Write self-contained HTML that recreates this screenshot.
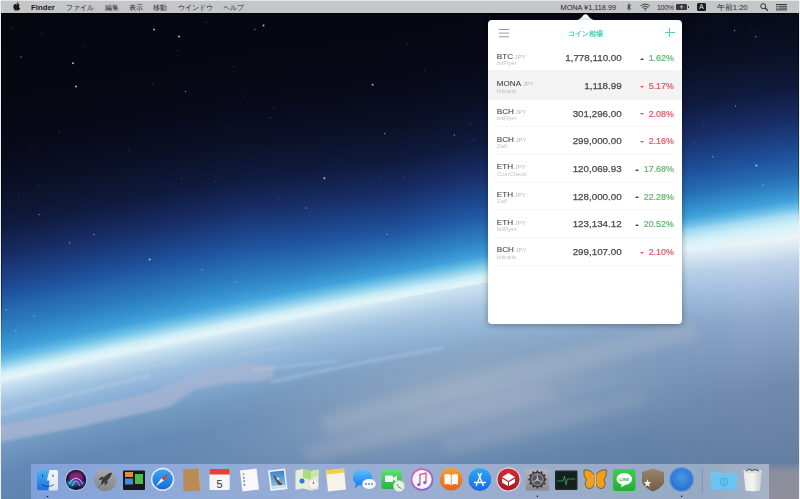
<!DOCTYPE html>
<html><head><meta charset="utf-8">
<style>
html,body{margin:0;padding:0;}
body{width:800px;height:499px;overflow:hidden;position:relative;font-family:"Liberation Sans",sans-serif;background:#0a0c1f;}
.abs{position:absolute;}
.c{position:absolute;top:0;width:8px;height:499px;}
#menubar{left:0;top:0;width:800px;height:13px;background:#c5c6c8;border-top:1px solid #e6e6e8;box-sizing:border-box;box-shadow:0 1px 1px rgba(0,0,0,.5);}
.mb{position:absolute;top:.8px;font-size:7.6px;line-height:13px;color:#2a2a2a;white-space:nowrap;}
#popover{left:488px;top:20px;width:194px;height:304.3px;background:#fff;border-radius:4px;box-shadow:0 1px 6px rgba(0,0,0,.35);}
#arrow{left:576px;top:13px;width:0;height:0;border-left:9.5px solid transparent;border-right:9.5px solid transparent;border-bottom:7.5px solid #fff;}
.row{position:absolute;left:0;width:194px;height:27.69px;}
.row.hl{background:transparent;}
.row:after{content:"";position:absolute;left:6px;right:8px;bottom:0;height:1px;background:#f6f6f6;}
.sym{position:absolute;left:8.8px;top:8.6px;font-size:8.1px;line-height:8.1px;color:#474747;-webkit-text-stroke:.1px #474747;white-space:nowrap;}
.sym i{font-style:normal;font-size:6.1px;color:#b8b8b8;margin-left:1.6px;-webkit-text-stroke:0;}
.ex{position:absolute;left:9px;top:15.9px;font-size:6px;line-height:6px;color:#c2c2c2;white-space:nowrap;}
.price{position:absolute;right:60.3px;top:9.1px;font-size:9.8px;line-height:9.8px;color:#484848;-webkit-text-stroke:.25px #484848;white-space:nowrap;}
.pct{position:absolute;right:8.2px;top:10.1px;font-size:8.9px;line-height:8.9px;white-space:nowrap;}
.pct.up{color:#5cb46a;-webkit-text-stroke:.2px #5cb46a;}
.pct.down{color:#e9505e;-webkit-text-stroke:.2px #e9505e;}
.pct b{display:inline-block;width:0;height:0;margin-right:5px;vertical-align:middle;position:relative;top:0;}
.pct.up b{border-left:2.1px solid transparent;border-right:2.1px solid transparent;border-bottom:2.2px solid #444;}
.pct.down b{border-left:2px solid transparent;border-right:2px solid transparent;border-top:2.2px solid #e9505e;}
#dock{left:30.5px;top:463.5px;width:738.5px;height:40px;background:linear-gradient(90deg,#7fa0da 0%,#86a4da 4%,#92abd8 24%,#9aaed0 55%,#9aacc8 78%,#96aac4 91%,#a6b2c8 100%);}
#grayr{left:769px;top:462px;width:30px;height:37px;background:linear-gradient(180deg,rgba(138,140,156,0) 0px,rgba(138,142,158,.8) 7px,#8c8e9c 12px,#908e9a 37px);}
</style></head><body>
<!--BG--><div id="bg"><div class="c" style="left:0px;background:linear-gradient(167.05deg,#06060e -57.6px,#060710 87.6px,#080a1a 147.1px,#0a1027 184.1px,#0f1b3e 220.2px,#182e68 251.4px,#1d4a92 279.6px,#2058a2 290.3px,#266bb0 304.0px,#2d82c2 322.5px,#3f9fd9 342.0px,#46a5dc 343.9px,#6abee7 351.7px,#78c6ea 353.7px,#c4eaf5 362.5px,#d4f0f7 365.4px,#ddf2f8 367.3px,#e1f4f8 370.3px,#e0f2f7 371.2px,#cbe1f0 376.1px,#adcde6 386.8px,#a0c1e0 393.7px,#8bb1d9 411.2px,#6f96bf 439.5px,#6288b6 462.8px,#5e81ab 518.4px,#5c7fa9 545.7px);background-size:800px 499px;background-position:-0px 0"></div>
<div class="c" style="left:8px;background:linear-gradient(167.11deg,#06060e -55.8px,#060710 87.5px,#080a1a 146.9px,#0a1026 184.0px,#0f1b3d 220.1px,#182d67 251.2px,#1d4a92 279.5px,#2057a2 290.2px,#266ab0 303.9px,#2d80c1 321.4px,#348dcc 330.2px,#41a1da 342.9px,#6ec1e8 352.6px,#c2e9f5 362.4px,#ceeef7 364.3px,#dcf2f8 367.2px,#e1f4f8 370.2px,#e1f3f8 371.1px,#cbe1f0 376.0px,#adcde7 386.7px,#a0c1e0 393.6px,#8ab0d8 412.1px,#6f97bf 439.4px,#6288b6 462.8px,#5e81ab 518.3px,#5c7fa9 547.6px);background-size:800px 499px;background-position:-8px 0"></div>
<div class="c" style="left:16px;background:linear-gradient(167.16deg,#06060e -54.1px,#060710 88.3px,#080a1a 146.8px,#0a1027 184.8px,#0f1b3e 220.9px,#182d67 251.1px,#1d4991 279.4px,#2058a3 291.1px,#266aaf 303.8px,#2d80c1 321.3px,#338dcb 330.1px,#40a0da 342.8px,#6dc0e8 352.5px,#c1e8f5 362.3px,#c9ecf6 363.2px,#dcf2f8 367.1px,#e2f4f8 371.0px,#cce2f0 375.9px,#aecee7 386.6px,#a1c1e0 393.5px,#8ab0d8 412.0px,#6f97bf 439.3px,#6288b6 462.7px,#5e81ab 518.3px,#5c7fa9 549.5px);background-size:800px 499px;background-position:-16px 0"></div>
<div class="c" style="left:24px;background:linear-gradient(167.21deg,#06060e -52.3px,#060710 89.1px,#080a1a 147.6px,#0a1027 184.7px,#0f1b3e 220.7px,#182e68 251.9px,#1d4a92 280.2px,#2057a2 291.0px,#266ab0 304.6px,#2d7fc0 321.2px,#338ccb 330.0px,#40a0da 342.6px,#6cc0e8 352.4px,#bfe8f5 362.1px,#c7ecf6 363.1px,#dcf2f8 367.0px,#e2f4f8 370.9px,#cce2f0 375.8px,#aecee7 386.5px,#a1c1e0 393.3px,#8ab0d8 411.9px,#6f97bf 439.2px,#6288b6 462.6px,#5e81ab 518.2px,#5c7fa9 551.3px);background-size:800px 499px;background-position:-24px 0"></div>
<div class="c" style="left:32px;background:linear-gradient(167.26deg,#06060e -50.6px,#060710 88.9px,#080a1a 147.4px,#0a1026 184.5px,#0f1a3d 220.6px,#182d67 251.8px,#1d4992 280.1px,#2058a3 291.8px,#266aaf 304.5px,#2d7fc0 321.0px,#328ac9 328.8px,#409fda 342.5px,#4ba8de 345.4px,#6bbfe8 352.2px,#c6ebf6 363.0px,#dbf2f8 366.9px,#e2f4f8 370.8px,#d2e7f2 374.7px,#c7dfef 377.6px,#adcde6 387.4px,#a1c1e0 393.2px,#8ab0d8 411.7px,#6f97bf 439.1px,#6288b6 462.5px,#5e81ab 518.1px,#5c7fa9 553.2px);background-size:800px 499px;background-position:-32px 0"></div>
<div class="c" style="left:40px;background:linear-gradient(167.31deg,#06060e -48.9px,#060710 89.7px,#080a1a 148.2px,#0a1027 185.3px,#0f1b3e 221.4px,#182e68 252.6px,#1d4a92 280.9px,#2058a2 291.6px,#266bb0 305.3px,#2d80c1 321.9px,#338dcb 330.6px,#41a1da 343.3px,#6abfe7 352.1px,#79c6ea 354.0px,#c4eaf6 362.8px,#daf1f8 366.7px,#e0f3f8 369.7px,#e1f4f8 370.6px,#e0f2f7 371.6px,#cae1f0 376.5px,#adcde6 387.2px,#a1c1e0 393.1px,#8ab1d9 411.6px,#6f96bf 439.9px,#6288b6 463.3px,#5e81ab 518.9px,#5c7ea8 555.0px);background-size:800px 499px;background-position:-40px 0"></div>
<div class="c" style="left:48px;background:linear-gradient(167.37deg,#06060e -47.2px,#060710 89.4px,#080a1a 148.0px,#0a1026 185.1px,#0f1b3d 221.2px,#182d67 252.4px,#1d4a92 280.7px,#2057a2 291.4px,#266ab0 305.1px,#2c7ebf 320.7px,#3189c8 328.5px,#40a0da 343.1px,#6fc1e8 352.9px,#c3e9f5 362.7px,#cfeef7 364.6px,#ddf2f8 367.5px,#e1f4f8 370.5px,#e0f3f7 371.4px,#cbe1f0 376.3px,#adcde6 387.1px,#a0c1e0 393.9px,#8ab0d8 412.4px,#6f97bf 439.7px,#6288b6 463.2px,#5e81ab 518.8px,#5c7ea8 556.8px);background-size:800px 499px;background-position:-48px 0"></div>
<div class="c" style="left:56px;background:linear-gradient(167.42deg,#06060e -45.5px,#060710 90.2px,#080a1a 148.7px,#0a1027 185.8px,#0f1b3e 221.9px,#182d67 252.2px,#1d4991 280.5px,#2058a3 292.2px,#266aaf 304.9px,#2c7dbf 320.5px,#3189c8 328.3px,#40a0da 343.0px,#6dc1e8 352.7px,#c1e9f5 362.5px,#c9ecf6 363.4px,#dcf2f8 367.4px,#e1f4f8 371.3px,#cce2f0 376.1px,#aecee7 386.9px,#a1c1e0 393.7px,#8ab0d8 412.2px,#6f97bf 439.6px,#6288b6 463.0px,#5e81ab 518.6px,#5b7ea8 558.6px);background-size:800px 499px;background-position:-56px 0"></div>
<div class="c" style="left:64px;background:linear-gradient(167.47deg,#06060e -43.8px,#060710 89.9px,#080a1a 148.5px,#0a1026 185.6px,#0f1b3e 221.7px,#182e68 252.9px,#1d4a92 281.3px,#2057a2 292.0px,#266ab0 305.7px,#2c7ebf 321.3px,#328ac9 329.1px,#3f9fd9 342.8px,#4ca8de 345.7px,#6cc0e8 352.5px,#bfe8f5 362.3px,#c7ecf6 363.2px,#dcf2f8 367.2px,#e2f4f8 371.1px,#cce2f0 375.9px,#aecee7 386.7px,#a1c1e0 393.5px,#8ab0d8 412.1px,#6f97bf 439.4px,#6388b6 462.8px,#5e81ab 519.4px,#5b7ea8 560.4px);background-size:800px 499px;background-position:-64px 0"></div>
<div class="c" style="left:72px;background:linear-gradient(167.52deg,#06060e -42.2px,#060710 90.6px,#080a1a 148.2px,#0a1026 185.3px,#0f1a3d 221.5px,#182d67 252.7px,#1d4991 281.0px,#2058a3 292.7px,#266aaf 305.4px,#2c7dbf 321.1px,#3189c8 328.9px,#41a1da 343.5px,#6bbfe8 352.3px,#c5ebf6 363.0px,#daf2f8 366.9px,#e2f4f8 370.8px,#dbeef5 372.8px,#cae1ef 376.7px,#adcde6 387.4px,#a1c1e0 393.3px,#8ab0d8 411.9px,#6f97bf 439.2px,#6388b6 462.6px,#5e82ab 519.3px,#5b7ea8 562.2px);background-size:800px 499px;background-position:-72px 0"></div>
<div class="c" style="left:80px;background:linear-gradient(167.57deg,#06060e -40.5px,#060710 90.3px,#080a1a 148.9px,#0a1027 186.0px,#0f1b3e 222.2px,#182e68 253.4px,#1d4a92 281.7px,#2057a2 292.5px,#266bb0 306.2px,#2c7dbf 320.8px,#3189c8 328.6px,#40a0da 343.3px,#6abee7 352.1px,#78c6ea 354.0px,#c4eaf5 362.8px,#d4f0f7 365.7px,#ddf2f8 367.7px,#e1f4f8 370.6px,#e0f2f7 371.6px,#cbe1f0 376.5px,#adcde6 387.2px,#a0c1df 394.1px,#8bb1d9 411.6px,#6f97bf 440.0px,#6388b6 463.4px,#5e82ab 519.1px,#5b7ea8 564.0px);background-size:800px 499px;background-position:-80px 0"></div>
<div class="c" style="left:88px;background:linear-gradient(167.63deg,#06060e -38.9px,#060710 90.0px,#080a1a 148.6px,#0a1026 185.8px,#0f1a3d 221.9px,#182d67 253.2px,#1d4991 281.5px,#2058a3 293.2px,#266aaf 305.9px,#2c7cbe 320.6px,#3188c7 328.4px,#40a0da 343.0px,#6ec1e8 352.8px,#c2e9f5 362.6px,#ceeef7 364.5px,#dcf2f8 367.4px,#e1f3f8 371.4px,#cbe2f0 376.2px,#aecee7 387.0px,#a0c1e0 393.8px,#8ab0d8 412.4px,#6f97bf 439.7px,#6389b6 463.2px,#5e82ab 519.8px,#5b7ea8 565.7px);background-size:800px 499px;background-position:-88px 0"></div>
<div class="c" style="left:96px;background:linear-gradient(167.68deg,#06060e -37.3px,#060710 90.7px,#080a1a 149.3px,#0a1027 186.4px,#0f1b3e 222.6px,#182e68 253.9px,#1d4a92 282.2px,#2057a2 292.9px,#266bb0 306.6px,#2c7dbf 321.3px,#3189c8 329.1px,#3f9fd9 342.8px,#47a5dc 344.7px,#6cc0e8 352.5px,#c0e8f5 362.3px,#c8ecf6 363.3px,#dcf2f8 367.2px,#e2f4f8 371.1px,#cce2f0 376.0px,#aecee7 386.7px,#a1c1e0 393.6px,#8ab0d8 412.1px,#7097bf 439.5px,#6389b6 462.9px,#5e82ab 519.6px,#5b7ea7 567.5px);background-size:800px 499px;background-position:-96px 0"></div>
<div class="c" style="left:104px;background:linear-gradient(167.73deg,#06060e -35.7px,#060710 90.4px,#080a1a 149.0px,#0a1026 186.1px,#0f1a3d 222.3px,#182d67 253.6px,#1d4a92 281.9px,#2057a2 292.6px,#266ab0 306.3px,#2c7dbe 321.0px,#3189c8 328.8px,#40a0da 343.5px,#6bbfe8 352.3px,#c6ebf6 363.0px,#dbf2f8 366.9px,#e2f4f8 370.8px,#d6eaf4 373.8px,#cae1ef 376.7px,#adcde6 387.4px,#a1c1e0 393.3px,#8ab0d8 411.9px,#7097bf 439.2px,#6489b6 462.7px,#5e82ab 520.3px,#5b7da7 569.2px);background-size:800px 499px;background-position:-104px 0"></div>
<div class="c" style="left:112px;background:linear-gradient(167.78deg,#06060e -34.1px,#060710 91.0px,#080a1a 149.6px,#0a1027 186.8px,#0f1b3e 222.9px,#182e68 254.2px,#1d4a92 282.6px,#2058a2 293.3px,#266bb0 307.0px,#2c7dbf 321.7px,#318ac9 329.5px,#40a0da 343.2px,#6abee7 352.0px,#78c6ea 353.9px,#c4eaf5 362.7px,#d4f0f7 365.6px,#ddf2f8 367.6px,#e1f4f8 370.5px,#e0f2f7 371.5px,#cbe1f0 376.4px,#adcde6 387.1px,#a0c1df 394.0px,#8bb1d8 411.6px,#7097bf 439.9px,#6489b6 463.4px,#5f82ab 521.0px,#5b7da7 570.9px);background-size:800px 499px;background-position:-112px 0"></div>
<div class="c" style="left:120px;background:linear-gradient(167.84deg,#06060e -32.5px,#060710 90.6px,#080a1a 149.3px,#0a1026 186.4px,#0f1a3d 222.6px,#182d67 253.9px,#1d4a92 282.2px,#2057a2 293.0px,#266ab0 306.7px,#2c7dbf 321.3px,#3189c8 329.2px,#3f9fd9 342.9px,#47a5dc 344.8px,#6dc1e8 352.6px,#c1e9f5 362.4px,#c9ecf6 363.4px,#dcf2f8 367.3px,#e1f3f8 371.2px,#cbe2f0 376.1px,#aecee7 386.8px,#a1c1df 393.7px,#8ab0d8 412.3px,#7097bf 439.6px,#6489b6 463.1px,#5f82ac 520.8px,#5b7da7 572.6px);background-size:800px 499px;background-position:-120px 0"></div>
<div class="c" style="left:128px;background:linear-gradient(167.89deg,#06060e -31.0px,#060710 91.2px,#080a1a 149.9px,#0a1027 187.1px,#0f1b3e 223.2px,#182e68 254.5px,#1d4a92 282.9px,#2058a2 293.6px,#266bb0 307.3px,#2c7cbe 321.0px,#3188c8 328.8px,#41a1da 343.5px,#6cc0e8 352.3px,#bfe8f5 362.1px,#c7ecf6 363.1px,#dbf2f8 367.0px,#e2f4f8 370.9px,#cce2f0 375.8px,#aecee7 386.5px,#a1c1e0 393.4px,#8ab0d8 411.9px,#7097bf 439.3px,#6489b6 462.8px,#5f82ac 521.5px,#5b7da7 574.3px);background-size:800px 499px;background-position:-128px 0"></div>
<div class="c" style="left:136px;background:linear-gradient(167.94deg,#06060e -29.4px,#060710 91.8px,#080a1a 149.5px,#0a1026 186.7px,#0f1a3d 222.9px,#182d67 254.2px,#1d4a92 282.5px,#2057a2 293.3px,#266ab0 307.0px,#2c7cbe 320.7px,#3088c7 328.5px,#40a0da 343.2px,#6abfe7 352.0px,#82caec 354.9px,#c5eaf6 362.7px,#daf1f8 366.6px,#e1f4f8 370.5px,#dbeef5 372.5px,#cae1ef 376.4px,#adcde6 387.2px,#a1c1e0 393.0px,#8bb0d8 411.6px,#7098bf 439.0px,#658ab6 463.5px,#5f82ac 522.1px,#5b7da7 575.9px);background-size:800px 499px;background-position:-136px 0"></div>
<div class="c" style="left:144px;background:linear-gradient(167.99deg,#06060e -27.9px,#060710 91.4px,#080a1a 150.1px,#0a1027 187.3px,#0f1b3e 223.5px,#182e68 254.8px,#1d4a92 283.1px,#2058a2 293.9px,#266bb0 307.6px,#2c7cbe 321.3px,#3189c8 329.1px,#3f9fd9 342.8px,#47a5dc 344.8px,#6fc1e8 352.6px,#c2e9f5 362.4px,#cfeef7 364.3px,#dcf2f8 367.3px,#e1f4f8 370.2px,#e1f3f7 371.2px,#cbe1f0 376.1px,#adcde6 386.8px,#a0c1df 393.7px,#8ab0d7 412.3px,#7097bf 439.6px,#658ab6 463.1px,#5f82ac 522.8px,#5b7da7 577.6px);background-size:800px 499px;background-position:-144px 0"></div>
<div class="c" style="left:152px;background:linear-gradient(168.05deg,#06060e -26.4px,#060710 92.0px,#080a1a 149.7px,#0a1026 186.9px,#0f1b3d 223.1px,#182d67 254.4px,#1d4a92 282.8px,#2057a2 293.5px,#266ab0 307.2px,#2c7cbe 320.9px,#3088c7 328.7px,#41a1da 343.4px,#6cc0e8 352.2px,#c0e8f5 362.0px,#c8ecf6 363.0px,#dcf2f8 366.9px,#e2f4f8 370.8px,#cce2f0 375.7px,#aecee7 386.5px,#a1c1df 393.3px,#8ab0d8 411.9px,#7198bf 439.3px,#668ab6 462.8px,#6082ac 522.4px,#5a7da7 579.2px);background-size:800px 499px;background-position:-152px 0"></div>
<div class="c" style="left:160px;background:linear-gradient(168.10deg,#06060e -24.9px,#060710 91.6px,#080a1a 150.3px,#0a1027 187.4px,#0f1b3e 223.7px,#182d67 254.0px,#1d4991 282.4px,#2058a3 294.1px,#266aaf 306.8px,#2c7bbd 320.5px,#3088c7 328.4px,#40a0da 343.0px,#6bbfe8 351.8px,#c6ebf6 362.6px,#daf2f8 366.5px,#e2f4f8 370.4px,#d6eaf4 373.4px,#cae1ef 376.3px,#adcce6 387.1px,#a1c1e0 392.9px,#8bb0d8 411.5px,#7198bf 438.9px,#668ab6 463.4px,#6082ac 524.1px,#5a7da6 580.8px);background-size:800px 499px;background-position:-160px 0"></div>
<div class="c" style="left:168px;background:linear-gradient(168.15deg,#06060e -23.4px,#060710 91.1px,#080a1a 149.8px,#0a1026 187.0px,#0f1b3e 223.2px,#182e68 254.5px,#1d4a92 282.9px,#2057a2 293.7px,#266ab0 307.4px,#2c7cbe 321.1px,#3189c8 328.9px,#3f9fd9 342.6px,#47a5dc 344.6px,#6fc2e9 352.4px,#c3eaf5 362.2px,#cfeef7 364.2px,#ddf2f8 367.1px,#e1f4f8 370.0px,#e0f2f7 371.0px,#cbe1f0 375.9px,#adcde6 386.7px,#a0c1df 393.5px,#8ab0d7 412.1px,#7198bf 439.5px,#678bb7 463.0px,#6083ac 524.7px,#5a7ca6 582.4px);background-size:800px 499px;background-position:-168px 0"></div>
<div class="c" style="left:176px;background:linear-gradient(168.20deg,#06060e -21.9px,#060710 91.6px,#080a1a 149.4px,#0a1026 186.6px,#0f1a3d 222.8px,#182d67 254.1px,#1d4991 282.5px,#2058a3 294.2px,#266aaf 307.0px,#2c7cbe 320.7px,#3088c7 328.5px,#41a1da 343.2px,#6cc0e8 352.0px,#c0e8f5 361.8px,#c8ecf6 362.8px,#dcf2f8 366.7px,#e1f4f8 370.6px,#cce2f0 375.5px,#aecee7 386.3px,#a1c1df 393.1px,#8ab0d8 411.7px,#7198bf 439.1px,#678bb7 462.6px,#6183ac 521.3px,#5a7ca6 584.0px);background-size:800px 499px;background-position:-176px 0"></div>
<div class="c" style="left:184px;background:linear-gradient(168.26deg,#06060e -20.5px,#060710 91.1px,#080a1a 149.9px,#0a1027 187.1px,#0f1b3e 223.3px,#182e68 254.6px,#1d4a92 283.0px,#2057a2 293.8px,#266bb0 307.5px,#2c7dbe 321.2px,#3087c7 328.1px,#40a0da 342.8px,#6bbfe8 351.6px,#c6ebf6 362.3px,#dbf2f8 366.3px,#e2f4f8 370.2px,#cae0ef 376.0px,#accce6 386.8px,#a1c1df 392.7px,#8bb0d8 411.3px,#7298bf 438.7px,#688cb7 463.2px,#6285ad 515.1px,#5a7ca6 585.6px);background-size:800px 499px;background-position:-184px 0"></div>
<div class="c" style="left:192px;background:linear-gradient(168.31deg,#06060e -19.0px,#060710 91.6px,#080a1a 149.4px,#0a1026 186.6px,#0f1b3d 222.8px,#182d67 254.2px,#1d4a92 282.6px,#2057a2 293.3px,#266ab0 307.1px,#2c7cbe 320.8px,#3188c7 328.6px,#3f9fd9 342.3px,#47a5dc 344.3px,#6fc2e9 352.1px,#c3eaf5 361.9px,#cfeef7 363.9px,#ddf2f8 366.8px,#e1f4f8 369.7px,#e0f2f7 370.7px,#cbe1f0 375.6px,#adcde6 386.4px,#a0c1df 393.2px,#8ab0d7 411.8px,#7298bf 439.3px,#698cb7 462.8px,#6486ae 508.8px,#5b7da7 580.3px,#5a7ca6 587.1px);background-size:800px 499px;background-position:-192px 0"></div>
<div class="c" style="left:200px;background:linear-gradient(168.36deg,#06060e -17.6px,#060710 91.1px,#080a1a 149.9px,#0a1027 187.1px,#0f1b3e 223.3px,#182d67 253.7px,#1d4991 282.1px,#2058a2 293.9px,#266aaf 306.6px,#2c7bbd 320.3px,#3088c7 328.1px,#41a0da 342.8px,#6cc0e8 351.6px,#c0e8f5 361.4px,#c8ecf6 362.4px,#dcf2f8 366.3px,#e1f3f8 370.2px,#cce2f0 375.1px,#aecee7 385.9px,#a1c1df 392.8px,#8ab0d7 411.4px,#7298bf 438.8px,#698db7 462.3px,#6587af 504.4px,#5b7da7 573.0px,#5a7ca6 588.7px);background-size:800px 499px;background-position:-200px 0"></div>
<div class="c" style="left:208px;background:linear-gradient(168.41deg,#06060e -16.2px,#060710 91.6px,#080a1a 149.4px,#0a1026 186.6px,#0f1b3d 222.8px,#182e68 254.2px,#1d4a92 282.6px,#2057a2 293.4px,#2569af 306.1px,#2c7bbd 319.8px,#3087c6 327.6px,#40a0da 342.3px,#6bbfe8 351.2px,#c5ebf6 361.9px,#daf2f8 365.9px,#e2f4f8 369.8px,#cae0ef 375.7px,#adcce6 386.4px,#a1c1df 392.3px,#8bb0d8 410.9px,#7399bf 438.3px,#6a8db7 462.8px,#6688b0 503.0px,#5b7ea7 569.6px,#5a7ca6 590.2px);background-size:800px 499px;background-position:-208px 0"></div>
<div class="c" style="left:216px;background:linear-gradient(168.47deg,#06060e -14.8px,#060710 91.0px,#080a1a 148.8px,#0a1026 186.1px,#0f1b3e 223.3px,#182d67 253.7px,#1d4991 282.1px,#2058a3 293.8px,#266aaf 306.6px,#2c7cbe 320.3px,#3088c7 328.1px,#3f9fd9 341.8px,#42a1db 342.8px,#6fc1e8 351.6px,#c2e9f5 361.4px,#cfeef7 363.4px,#dcf2f8 366.3px,#e1f4f8 369.3px,#e0f2f7 370.3px,#cbe1ef 375.2px,#adcde6 385.9px,#a0c1df 392.8px,#8ab0d7 411.4px,#7399bf 438.9px,#6b8eb7 462.4px,#6889b1 499.6px,#5c7ea8 565.2px,#5a7ca6 591.7px);background-size:800px 499px;background-position:-216px 0"></div>
<div class="c" style="left:224px;background:linear-gradient(168.52deg,#06060e -13.4px,#060710 91.4px,#080a1a 149.3px,#0a1026 186.5px,#0f1b3e 222.8px,#182e68 254.1px,#1d4a92 282.5px,#2057a2 293.3px,#266ab0 307.0px,#2c7cbe 320.8px,#3087c7 327.6px,#40a0da 342.3px,#6cc0e8 351.1px,#bfe8f5 360.9px,#c7ecf6 361.9px,#dcf2f8 365.8px,#e2f4f8 369.8px,#cce2f0 374.7px,#aecee7 385.4px,#a1c1df 392.3px,#8bb0d7 410.9px,#7499bf 438.4px,#6c8eb8 462.9px,#698ab1 498.1px,#5c7fa8 562.8px,#5a7ca6 593.2px);background-size:800px 499px;background-position:-224px 0"></div>
<div class="c" style="left:232px;background:linear-gradient(168.57deg,#06060e -12.0px,#060710 90.9px,#080a1a 148.7px,#0a1026 185.9px,#0f1a3d 222.2px,#182d67 253.6px,#1d4991 282.0px,#2058a3 293.8px,#266aaf 306.5px,#2c7cbe 320.2px,#3188c7 328.1px,#409fda 341.8px,#4da9de 344.7px,#6abfe7 350.6px,#79c6ea 352.6px,#c4eaf6 361.4px,#daf1f8 365.3px,#e1f4f8 369.2px,#d6eaf4 372.2px,#cae0ef 375.1px,#adcde6 385.9px,#a1c1df 391.8px,#8bb0d7 410.4px,#759ac0 437.9px,#6d8fb8 462.4px,#6a8bb2 496.7px,#5c7fa8 561.4px,#5a7ca6 594.7px);background-size:800px 499px;background-position:-232px 0"></div>
<div class="c" style="left:240px;background:linear-gradient(168.62deg,#06060e -10.7px,#060710 91.3px,#080a1a 149.1px,#0a1027 186.4px,#0f1b3e 222.6px,#182e68 254.0px,#1d4a92 282.4px,#2057a2 293.2px,#266bb0 306.9px,#2c7dbe 320.7px,#3088c7 327.5px,#41a1da 342.2px,#6dc1e8 351.1px,#c1e9f5 360.9px,#c9ecf6 361.8px,#dcf2f8 365.8px,#e1f4f8 368.7px,#e0f2f7 369.7px,#cbe1f0 374.6px,#aecde6 385.4px,#a1c1df 392.2px,#8bb0d7 410.9px,#759ac0 437.3px,#6e90b8 462.8px,#6c8cb3 495.2px,#5d7fa9 558.9px,#5a7ca6 596.1px);background-size:800px 499px;background-position:-240px 0"></div>
<div class="c" style="left:248px;background:linear-gradient(168.68deg,#06060e -9.4px,#060710 91.6px,#080a1a 149.5px,#0a1026 186.8px,#0f1b3e 223.0px,#182e68 254.4px,#1d4a92 282.8px,#2057a2 293.6px,#266ab0 307.4px,#2c7dbf 321.1px,#318ac9 328.9px,#409fda 341.7px,#6bbfe8 350.5px,#c6ebf6 361.3px,#dbf2f8 365.2px,#e2f4f8 369.1px,#c9e0ef 375.0px,#accce5 385.8px,#a1c1df 391.7px,#8bb0d7 410.3px,#769ac0 436.8px,#6f90b8 462.3px,#6d8eb4 492.7px,#5d7fa9 558.4px,#5a7ca6 597.6px);background-size:800px 499px;background-position:-248px 0"></div>
<div class="c" style="left:256px;background:linear-gradient(168.73deg,#06060e -8.0px,#060710 92.0px,#080a1a 149.9px,#0a1026 187.1px,#0f1a3d 223.4px,#182d67 254.8px,#1d4a92 283.2px,#2057a2 294.0px,#266ab0 307.8px,#2c7dbf 321.5px,#328ac9 329.3px,#41a0da 342.1px,#6fc2e9 350.9px,#c3eaf5 360.7px,#cfeef7 362.7px,#ddf2f8 365.6px,#e1f4f8 368.6px,#dbeef5 370.5px,#cae1ef 374.5px,#adcde6 385.2px,#a1c1df 392.1px,#8bb0d6 410.7px,#769bc0 437.2px,#7191b9 461.7px,#6f8fb4 491.2px,#5d80a9 556.9px,#5a7ca6 599.0px);background-size:800px 499px;background-position:-256px 0"></div>
<div class="c" style="left:264px;background:linear-gradient(168.78deg,#06060e -6.7px,#060710 92.4px,#080a1a 151.2px,#0a1027 188.5px,#0f1b3e 224.8px,#182d67 255.2px,#1d4991 283.6px,#2058a3 295.4px,#266aaf 308.1px,#2c7dbf 321.9px,#3189c8 328.7px,#3f9fd9 341.5px,#48a6dd 343.5px,#6cc0e8 350.3px,#c0e8f5 360.1px,#c8ecf6 361.1px,#dcf2f8 365.0px,#e2f4f8 369.0px,#cbe1f0 373.9px,#aecee6 384.7px,#a1c1df 391.5px,#8bb0d7 410.2px,#779bc0 436.6px,#7292b9 462.2px,#7090b5 490.6px,#5e80a9 555.3px,#5a7ca6 600.5px);background-size:800px 499px;background-position:-264px 0"></div>
<div class="c" style="left:272px;background:linear-gradient(168.83deg,#06060e -5.4px,#060710 93.7px,#080a1a 151.6px,#0a1027 188.8px,#0f1b3e 225.1px,#182e68 256.5px,#1d4a92 285.0px,#2057a2 295.8px,#266bb0 309.5px,#2d80c1 324.2px,#3894d1 335.0px,#40a0da 341.9px,#6abfe7 349.7px,#79c6ea 351.7px,#c4eaf6 360.5px,#daf1f8 364.4px,#e1f4f8 368.4px,#cae0ef 374.3px,#adcce6 385.0px,#a0c0df 391.9px,#8bb0d6 410.6px,#789cc0 436.1px,#7393b9 461.6px,#7291b6 489.0px,#5e80a9 554.8px,#5a7ca6 599.9px,#5a7ca6 601.9px);background-size:800px 499px;background-position:-272px 0"></div>
<div class="c" style="left:280px;background:linear-gradient(168.89deg,#06060e -4.1px,#060710 94.0px,#080a1a 151.9px,#0a1026 189.2px,#0f1b3d 225.5px,#182d67 256.9px,#1d4a92 285.3px,#2057a2 296.1px,#266cb1 310.8px,#2e84c4 326.5px,#3f9fd9 341.3px,#48a6dc 343.2px,#6dc0e8 350.1px,#c1e8f5 359.9px,#c9ecf6 360.9px,#dcf2f8 364.8px,#e1f4f8 367.8px,#dff2f7 368.7px,#cbe1ef 373.6px,#aecde6 384.4px,#a1c1df 391.3px,#8cb0d6 409.9px,#799cc0 435.5px,#7594ba 462.0px,#7492b6 488.4px,#5e80aa 554.2px,#5a7ca6 599.3px,#5a7ca6 603.3px);background-size:800px 499px;background-position:-280px 0"></div>
<div class="c" style="left:288px;background:linear-gradient(168.94deg,#06060e -2.9px,#060710 94.3px,#080a1a 152.2px,#0a1026 189.5px,#0f1b3e 226.8px,#182d67 257.2px,#1d4991 285.7px,#2058a3 297.4px,#2c7abd 321.0px,#3088c7 328.9px,#40a0da 341.6px,#6bbfe8 349.5px,#c6ebf6 360.3px,#daf2f8 364.2px,#e2f4f8 368.1px,#c9e0ef 374.0px,#adcce5 384.8px,#a2c1df 390.7px,#8cb1d7 409.3px,#7a9dc1 434.8px,#7695ba 461.3px,#7693b7 486.9px,#5f81aa 553.6px,#5a7ca6 597.8px,#5a7ca6 604.6px);background-size:800px 499px;background-position:-288px 0"></div>
<div class="c" style="left:296px;background:linear-gradient(168.99deg,#06060e -1.6px,#060710 95.6px,#080a1a 153.5px,#0a1027 190.8px,#0f1b3e 227.1px,#182e68 258.5px,#1d4a92 287.0px,#2057a2 297.8px,#2b77ba 319.4px,#3188c7 329.2px,#3f9fd9 341.0px,#42a1db 341.9px,#6ec1e8 349.8px,#c2e9f5 359.6px,#ceeef7 361.6px,#dcf2f8 364.5px,#e1f4f8 367.5px,#cae0ef 373.4px,#aecde6 384.2px,#a1c1df 391.0px,#8cb0d6 409.7px,#7b9dc1 434.2px,#7896ba 461.7px,#7795b7 486.2px,#5f81aa 553.0px,#5a7ca6 596.2px,#5a7ca6 606.0px);background-size:800px 499px;background-position:-296px 0"></div>
<div class="c" style="left:304px;background:linear-gradient(169.05deg,#06060e -0.4px,#060710 95.8px,#080a1a 153.8px,#0a1027 191.1px,#0f1b3e 227.4px,#182e68 258.8px,#1d4a92 287.3px,#2057a2 298.1px,#2b77ba 319.7px,#3087c6 328.5px,#40a0da 341.3px,#6bbfe8 349.1px,#c6ebf6 359.9px,#dbf2f8 363.9px,#e2f4f8 367.8px,#d7ebf4 369.8px,#c8dfef 373.7px,#adcce5 384.5px,#a2c1df 390.4px,#8db1d6 409.0px,#7c9ec2 433.6px,#7997bb 461.1px,#7996b8 484.6px,#6c8bb1 519.0px,#5f81aa 555.3px,#5a7ca6 597.5px,#5a7ca6 607.3px);background-size:800px 499px;background-position:-304px 0"></div>
<div class="c" style="left:312px;background:linear-gradient(169.10deg,#06060e 0.8px,#060710 96.1px,#080a1a 154.0px,#0a1027 191.3px,#0f1b3e 227.7px,#182e68 259.1px,#1d4a92 287.6px,#2057a2 298.4px,#2a76b9 319.0px,#3088c7 328.8px,#41a1da 341.6px,#6fc1e8 349.4px,#c3e9f5 359.3px,#cfeef7 361.2px,#ddf2f8 364.2px,#e1f4f8 367.1px,#c9e0ef 373.0px,#aecde6 383.8px,#a2c1df 390.7px,#8db0d6 409.3px,#7c9fc2 432.9px,#7b98bb 460.4px,#7b97b9 484.0px,#6f8eb2 514.4px,#6082aa 551.7px,#5a7ca6 593.0px,#5a7ca6 608.7px);background-size:800px 499px;background-position:-312px 0"></div>
<div class="c" style="left:320px;background:linear-gradient(169.15deg,#06060e 2.1px,#060710 96.3px,#080a1a 154.3px,#0a1027 191.6px,#0f1b3e 227.9px,#182e68 259.4px,#1d4a92 287.9px,#2057a2 298.7px,#2b76ba 319.3px,#2f86c6 328.1px,#40a0da 340.9px,#6bc0e8 348.7px,#bfe8f5 358.6px,#c7ecf6 359.5px,#dbf2f8 363.5px,#e2f4f8 367.4px,#daedf5 368.4px,#c8dfef 373.3px,#adcce5 384.1px,#a2c2df 390.0px,#8db1d6 408.7px,#7ea0c3 431.2px,#7c99bc 453.8px,#7d99ba 481.3px,#7491b4 506.9px,#6183ab 547.1px,#5b7ca6 586.4px,#5a7ca6 610.0px);background-size:800px 499px;background-position:-320px 0"></div>
<div class="c" style="left:328px;background:linear-gradient(169.20deg,#06060e 3.2px,#060710 96.6px,#080a1a 154.5px,#0a1027 191.8px,#0f1b3e 228.2px,#182e68 259.6px,#1d4a92 288.1px,#2057a2 298.9px,#2a75b9 318.6px,#3087c6 328.4px,#41a1da 341.2px,#70c2e9 349.0px,#c3eaf5 358.8px,#d4f0f7 361.8px,#ddf2f8 363.8px,#e1f4f8 366.7px,#d8ebf4 368.7px,#c9dfef 372.6px,#accbe5 384.4px,#a2c1df 390.3px,#8db1d6 408.9px,#7ea0c3 431.5px,#7d9abc 458.1px,#7f9aba 480.6px,#7693b5 505.2px,#6283ab 546.5px,#5b7ca6 584.8px,#5a7ca6 611.3px);background-size:800px 499px;background-position:-328px 0"></div>
<div class="c" style="left:336px;background:linear-gradient(169.26deg,#06060e 4.4px,#060710 96.8px,#080a1a 154.7px,#0a1026 192.1px,#0f1b3e 228.4px,#182e68 259.9px,#1d4a92 288.4px,#2057a2 299.2px,#2a74b8 317.8px,#3088c7 328.6px,#3f9fd9 340.4px,#50abdf 343.4px,#6cc0e8 348.3px,#bfe8f5 358.1px,#c7ecf6 359.1px,#dcf2f8 363.0px,#e2f4f8 367.0px,#d9ecf5 367.9px,#c7deee 372.9px,#adcce5 383.7px,#a3c2df 389.6px,#8eb1d6 408.2px,#80a1c4 429.8px,#7e9cbe 444.6px,#819cbc 466.2px,#7f9aba 486.8px,#6e8db2 520.2px,#6082aa 552.6px,#5a7ca6 591.0px,#5a7ca6 612.6px);background-size:800px 499px;background-position:-336px 0"></div>
<div class="c" style="left:344px;background:linear-gradient(169.31deg,#06060e 5.6px,#060710 97.0px,#080a1a 155.0px,#0a1026 192.3px,#0f1b3d 228.7px,#182e68 260.1px,#1d4a92 288.6px,#2057a2 299.4px,#2a74b8 318.1px,#2f86c6 327.9px,#40a0da 340.7px,#70c2e9 348.5px,#c4eaf5 358.4px,#d4f0f7 361.3px,#ddf2f8 363.3px,#e1f4f8 366.2px,#daedf5 367.2px,#c8dfef 372.1px,#accbe5 383.9px,#a2c2df 389.8px,#8eb1d6 408.5px,#80a1c4 430.1px,#809dbe 448.8px,#839dbb 478.2px,#7b97b7 499.9px,#6384ac 544.1px,#5b7da7 578.5px,#5a7ca6 613.8px);background-size:800px 499px;background-position:-344px 0"></div>
<div class="c" style="left:352px;background:linear-gradient(169.36deg,#06060e 6.7px,#060710 97.2px,#080a1a 155.1px,#0a1026 192.5px,#0f1b3d 228.9px,#182e68 260.3px,#1d4a92 288.8px,#2057a2 299.6px,#2971b6 316.3px,#3087c6 328.1px,#3f9fd9 339.9px,#49a7dd 341.9px,#67bde7 346.8px,#6cc0e8 347.8px,#c0e8f5 357.6px,#c8ecf6 358.6px,#dcf2f8 362.5px,#e2f4f8 366.5px,#d8ebf4 367.4px,#c7deee 372.3px,#aecce5 383.2px,#a3c2e0 389.1px,#8fb2d6 407.7px,#82a3c5 428.4px,#809ec0 441.1px,#849ebd 465.7px,#839cbb 485.4px,#7592b4 512.9px,#6384ac 546.3px,#5b7da6 581.7px,#5a7ca6 615.1px);background-size:800px 499px;background-position:-352px 0"></div>
<div class="c" style="left:360px;background:linear-gradient(169.42deg,#06060e 7.9px,#060710 97.3px,#080a1a 155.3px,#0a1026 192.7px,#0f1b3d 229.0px,#182d67 260.5px,#1d4a92 289.0px,#2057a2 299.8px,#2971b6 316.5px,#3088c7 328.3px,#40a0da 340.1px,#70c2e9 348.0px,#c4eaf5 357.8px,#d4f0f7 360.8px,#ddf2f8 362.7px,#e1f4f8 365.7px,#d9ecf5 366.7px,#c8dfef 371.6px,#adcce5 383.4px,#a3c2df 389.3px,#8fb1d6 408.0px,#82a3c5 428.6px,#819fbf 442.4px,#869fbd 476.8px,#7f9ab9 497.4px,#6485ad 542.6px,#5c7ea7 575.1px,#5a7ca6 616.3px);background-size:800px 499px;background-position:-360px 0"></div>
<div class="c" style="left:368px;background:linear-gradient(169.47deg,#06060e 9.0px,#060710 97.5px,#080a1a 155.5px,#0a1026 192.8px,#0f1b3d 229.2px,#182d67 260.7px,#1d4a92 289.2px,#2057a2 300.0px,#286fb3 314.8px,#2f86c6 327.5px,#3f9fd9 339.3px,#42a2db 340.3px,#67bde6 346.2px,#6cc0e8 347.2px,#c0e8f5 357.0px,#c8ecf6 358.0px,#dcf2f8 362.0px,#e2f4f8 365.9px,#d6eaf4 366.9px,#c7deee 371.8px,#aecde6 382.6px,#a4c3e0 388.5px,#90b2d6 407.2px,#84a4c6 426.8px,#82a0c0 438.6px,#87a0be 466.2px,#869fbc 484.8px,#7995b6 509.4px,#6585ad 542.9px,#5c7ea7 574.3px,#5a7ca6 617.6px);background-size:800px 499px;background-position:-368px 0"></div>
<div class="c" style="left:376px;background:linear-gradient(169.52deg,#06060e 10.1px,#060711 98.6px,#080a1a 155.6px,#0a1026 193.0px,#0f1a3d 229.4px,#182d67 260.9px,#1d4a92 289.4px,#2057a2 300.2px,#286fb4 314.9px,#3087c6 327.7px,#40a0da 339.5px,#70c2e9 347.4px,#c3eaf5 357.2px,#d4f0f7 360.2px,#ddf2f8 362.1px,#e1f4f8 365.1px,#d7ebf4 366.1px,#c5ddee 372.0px,#accae4 383.8px,#a3c2df 389.7px,#90b2d6 407.4px,#84a4c6 427.0px,#83a0c0 439.8px,#89a1be 474.2px,#839dbb 493.9px,#6586ad 542.1px,#5c7ea8 572.6px,#5a7ca6 618.8px);background-size:800px 499px;background-position:-376px 0"></div>
<div class="c" style="left:384px;background:linear-gradient(169.58deg,#06060e 11.2px,#060711 98.7px,#080a1a 155.8px,#0a1026 193.1px,#0f1a3d 229.5px,#182d67 261.0px,#1d4991 289.5px,#2058a3 301.3px,#2972b7 317.1px,#3087c7 327.9px,#41a1da 339.7px,#67bce6 345.6px,#6cc0e8 346.6px,#bfe8f5 356.4px,#c7ecf6 357.4px,#dcf2f8 361.3px,#e2f4f8 365.3px,#d5e9f4 366.2px,#c6ddee 371.2px,#adcbe5 383.0px,#a4c2e0 388.9px,#90b2d6 407.5px,#85a4c5 427.2px,#84a1c0 441.0px,#8ba2be 473.4px,#859ebb 492.1px,#6586ad 542.3px,#5c7ea7 572.8px,#5a7ca6 620.0px);background-size:800px 499px;background-position:-384px 0"></div>
<div class="c" style="left:392px;background:linear-gradient(169.63deg,#06060e 12.3px,#060711 98.8px,#080a1a 156.9px,#0a1026 193.3px,#0f1a3d 229.7px,#182d67 261.1px,#1d4991 289.7px,#2058a3 301.5px,#2a74b8 318.2px,#2f86c5 327.0px,#3f9fd9 338.8px,#4aa7dd 340.8px,#6fc1e9 346.7px,#c3e9f5 356.6px,#cfeef7 358.5px,#ddf2f8 361.5px,#e1f4f8 364.4px,#d6eaf4 365.4px,#c5ddee 371.3px,#adcbe5 383.1px,#a4c2e0 389.0px,#91b3d6 406.7px,#86a5c7 425.4px,#85a1c1 438.2px,#8ca3bf 472.6px,#879fbc 491.3px,#6686ad 541.5px,#5d7ea8 571.0px,#5a7ca6 621.2px);background-size:800px 499px;background-position:-392px 0"></div>
<div class="c" style="left:400px;background:linear-gradient(169.68deg,#06060e 13.3px,#060710 97.9px,#080a1a 156.0px,#0a1026 193.4px,#0f1b3e 229.8px,#182e68 261.3px,#1d4a92 289.8px,#2057a2 300.6px,#2465ab 308.5px,#2d7fc0 323.2px,#328bca 329.1px,#40a0da 339.0px,#67bce6 344.9px,#6bbfe8 345.9px,#c7ebf6 356.7px,#dbf2f8 360.6px,#e2f4f8 364.6px,#d4e8f3 365.5px,#c6ddee 370.5px,#accae4 383.3px,#a4c2e0 389.2px,#91b3d6 406.9px,#86a6c6 425.6px,#86a2c1 438.3px,#8da4bf 471.8px,#89a1bd 489.5px,#6686ad 541.7px,#5d7ea8 570.2px,#5a7ca6 622.3px);background-size:800px 499px;background-position:-400px 0"></div>
<div class="c" style="left:408px;background:linear-gradient(169.73deg,#06060e 14.4px,#060711 98.0px,#080a1a 155.1px,#0a1026 192.5px,#0f1b3d 228.9px,#182e68 260.4px,#1d4a92 288.9px,#2057a2 299.7px,#2870b4 314.5px,#2f86c6 326.3px,#3f9fd9 338.1px,#4aa7dd 340.1px,#6ec1e8 346.0px,#c2e9f5 355.8px,#ceeef7 357.8px,#dcf2f8 360.7px,#e1f4f8 363.7px,#d4e9f4 364.7px,#c5dcee 370.6px,#accae4 383.4px,#a4c2e0 389.3px,#91b3d6 407.0px,#87a6c6 425.7px,#87a2c1 439.5px,#8fa5bf 471.0px,#8aa2bd 488.7px,#6687ad 540.8px,#5d7fa8 569.4px,#5a7ca6 620.5px,#5a7ca6 623.5px);background-size:800px 499px;background-position:-408px 0"></div>
<div class="c" style="left:416px;background:linear-gradient(169.79deg,#06060e 15.4px,#060711 97.1px,#080a1a 154.2px,#0a1026 191.6px,#0f1b3d 228.0px,#182e68 259.5px,#1d4a92 288.0px,#2057a2 298.9px,#286fb4 313.6px,#3087c7 326.4px,#41a0da 338.2px,#6bbfe8 345.1px,#c6ebf6 355.9px,#dbf2f8 359.9px,#e2f4f8 363.8px,#d2e7f3 364.8px,#c4dcee 370.7px,#acc9e4 383.5px,#a0c0de 392.3px,#92b3d5 407.1px,#87a6c6 425.8px,#88a3c1 439.6px,#90a6c0 471.1px,#8ba2be 488.8px,#6687ad 541.0px,#5d7fa8 569.5px,#5a7ca6 622.6px,#5a7ca6 624.6px);background-size:800px 499px;background-position:-416px 0"></div>
<div class="c" style="left:424px;background:linear-gradient(169.84deg,#06060e 16.4px,#060711 96.2px,#080a1a 153.3px,#0a1026 190.7px,#0f1b3d 227.1px,#182e68 258.6px,#1d4a92 287.1px,#2057a2 298.0px,#286fb4 312.7px,#2f86c6 325.5px,#3f9fd9 337.3px,#4aa7dd 339.3px,#6dc1e8 345.2px,#c1e9f5 355.0px,#c9ecf6 356.0px,#dcf2f8 360.0px,#e1f4f8 362.9px,#d3e7f3 363.9px,#c5dcee 369.8px,#abc9e3 383.6px,#9bbbdc 397.4px,#90b1d3 409.2px,#88a6c6 426.9px,#8aa3c1 444.6px,#91a6c0 470.2px,#8ca3be 487.9px,#7491b4 520.4px,#6484ac 547.0px,#5c7da7 577.5px,#5a7ca6 625.7px);background-size:800px 499px;background-position:-424px 0"></div>
<div class="c" style="left:432px;background:linear-gradient(169.89deg,#06060e 17.4px,#060711 95.2px,#080a1a 152.3px,#0a1026 189.7px,#0f1b3d 226.1px,#182d67 257.7px,#1d4a92 286.2px,#2057a2 297.0px,#2870b5 312.8px,#3088c7 325.6px,#40a0da 337.4px,#71c2e9 345.3px,#bde6f5 354.1px,#cbedf6 356.1px,#daf1f8 359.1px,#e1f4f8 363.0px,#d1e6f3 364.0px,#c4dcee 369.9px,#abc8e3 383.7px,#93b4d6 406.3px,#89a7c7 424.0px,#88a4c2 436.8px,#91a7c0 469.3px,#8da4be 487.0px,#7894b6 515.6px,#6586ad 543.2px,#5c7ea8 571.7px,#5a7ca6 626.8px);background-size:800px 499px;background-position:-432px 0"></div>
<div class="c" style="left:440px;background:linear-gradient(169.95deg,#06060e 18.4px,#060711 94.2px,#080a1a 151.4px,#0a1026 188.8px,#0f1b3d 225.2px,#182d67 256.7px,#1d4a92 285.3px,#2057a2 296.1px,#2870b4 311.9px,#3087c6 324.7px,#3f9fd9 336.5px,#49a7dd 338.4px,#68bde7 343.4px,#6cc0e8 344.3px,#c0e8f5 354.2px,#c8ecf6 355.2px,#dcf2f8 359.1px,#e1f4f8 362.1px,#d1e6f3 363.1px,#c3dbed 369.9px,#abc8e3 383.7px,#94b4d7 405.4px,#89a8c8 423.1px,#89a4c2 435.9px,#92a7c1 469.4px,#8ea4bf 486.1px,#7b97b7 511.7px,#6787ae 540.3px,#5d7fa8 567.9px,#5a7ca6 614.1px,#5a7ca6 627.9px);background-size:800px 499px;background-position:-440px 0"></div>
<div class="c" style="left:448px;background:linear-gradient(170.00deg,#06060e 19.4px,#060711 93.3px,#080a1a 150.4px,#0a1026 187.8px,#0f1b3d 224.2px,#182d67 255.8px,#1d4a92 284.3px,#2057a2 295.1px,#2972b6 312.9px,#2f86c6 323.7px,#41a0da 336.5px,#70c2e9 344.4px,#c4eaf5 354.2px,#d4f0f7 357.2px,#ddf2f8 359.2px,#e1f4f8 362.1px,#d0e5f2 363.1px,#c2daed 370.0px,#a9c6e2 384.8px,#95b5d7 404.5px,#8aa8c8 423.2px,#89a5c3 436.0px,#93a8c1 468.5px,#8fa5bf 485.2px,#7d98b8 509.8px,#6787ae 539.4px,#5d7fa8 567.0px,#5a7ca6 609.3px,#5a7ca6 629.0px);background-size:800px 499px;background-position:-448px 0"></div>
<div class="c" style="left:456px;background:linear-gradient(170.05deg,#06060e 20.4px,#060711 93.2px,#080a1a 149.4px,#0a1026 186.8px,#0f1a3d 223.3px,#182d67 254.8px,#1d4a92 283.3px,#2057a2 294.2px,#2971b5 310.9px,#3088c7 323.7px,#40a0da 335.6px,#6dc1e8 343.4px,#c0e8f5 353.3px,#c8ecf6 354.3px,#dcf2f8 358.2px,#e2f4f8 362.1px,#cee4f2 363.1px,#c2daed 370.0px,#a9c6e2 384.8px,#95b5d7 404.5px,#8aa9c9 422.2px,#8aa5c3 435.0px,#93a8c1 468.5px,#8fa5bf 485.3px,#7c97b7 510.9px,#6787ae 539.4px,#5d7fa8 567.0px,#5a7ca6 611.3px,#5a7ca6 630.1px);background-size:800px 499px;background-position:-456px 0"></div>
<div class="c" style="left:464px;background:linear-gradient(170.11deg,#06060e 21.3px,#060711 92.2px,#080a1a 149.4px,#0a1027 186.8px,#0f1b3e 223.3px,#182e68 254.8px,#1d4a92 283.3px,#2058a2 294.2px,#2971b6 310.9px,#3087c6 322.8px,#3f9fd9 334.6px,#42a2db 335.6px,#6bbfe8 342.5px,#c4eaf5 353.3px,#d9f1f8 357.2px,#def3f8 359.2px,#e1f4f8 361.2px,#cfe4f2 362.2px,#c1d9ed 370.0px,#a9c6e2 384.8px,#95b5d7 404.5px,#8aa9c8 422.3px,#8aa5c3 435.1px,#93a8c1 468.6px,#8fa5bf 485.3px,#7b96b7 511.9px,#6787ae 539.5px,#5d7fa8 567.1px,#5a7ca6 613.4px,#5a7ca6 631.1px);background-size:800px 499px;background-position:-464px 0"></div>
<div class="c" style="left:472px;background:linear-gradient(170.16deg,#06060e 22.2px,#060711 92.2px,#080a1a 148.4px,#0a1026 185.8px,#0f1a3d 222.2px,#182d67 253.8px,#1d4a92 282.4px,#2057a2 293.2px,#286fb4 309.0px,#2f86c6 321.8px,#40a0da 334.6px,#70c2e9 342.5px,#c0e8f5 352.3px,#c8ecf6 353.3px,#dbf2f8 357.2px,#e1f4f8 361.2px,#cee3f2 362.2px,#bfd8ec 371.0px,#a9c6e2 384.8px,#96b6d8 403.5px,#8aa9c8 422.3px,#8aa5c3 435.1px,#93a8c1 467.6px,#8fa5bf 484.3px,#7d98b8 509.0px,#6888ae 537.5px,#5e7fa8 564.1px,#5a7ca6 601.6px,#5a7ca6 632.1px);background-size:800px 499px;background-position:-472px 0"></div>
<div class="c" style="left:480px;background:linear-gradient(170.21deg,#06060e 23.1px,#060711 91.1px,#080a1a 148.3px,#0a1027 185.7px,#0f1b3e 222.2px,#182e68 253.7px,#1d4a92 282.3px,#2058a2 293.2px,#286eb3 307.9px,#3087c7 321.7px,#3f9fd9 333.6px,#4fabdf 336.5px,#6dc0e8 341.4px,#bce6f5 351.3px,#caedf6 353.3px,#dcf2f8 357.2px,#e1f4f8 360.2px,#cee4f2 361.2px,#c1daed 369.0px,#a9c6e2 384.8px,#96b6d8 403.5px,#8ba9c9 421.3px,#8aa5c3 434.1px,#93a8c1 467.6px,#8fa5bf 484.3px,#7c97b7 510.0px,#6787ae 538.5px,#5d7fa8 566.1px,#5a7ca6 611.5px,#5a7ca6 633.1px);background-size:800px 499px;background-position:-480px 0"></div>
<div class="c" style="left:488px;background:linear-gradient(170.27deg,#06060e 24.0px,#060711 91.1px,#080a1a 147.2px,#0a1026 184.7px,#0f1a3d 221.2px,#182d67 252.7px,#1d4a92 281.3px,#2057a2 292.1px,#286fb4 307.9px,#3087c6 320.7px,#41a1da 333.5px,#6abee7 340.4px,#c0e8f5 351.3px,#c8ecf6 352.3px,#daf2f8 356.2px,#e1f4f8 360.1px,#cde3f2 361.1px,#aecae5 380.8px,#95b6d7 403.5px,#8ba9c9 421.2px,#8aa5c3 434.1px,#93a8c1 467.6px,#8ea4bf 485.3px,#7692b5 516.9px,#6585ad 542.5px,#5c7ea7 572.0px,#5a7ca6 634.1px);background-size:800px 499px;background-position:-488px 0"></div>
<div class="c" style="left:496px;background:linear-gradient(170.32deg,#06060e 24.9px,#060711 91.0px,#080a1a 147.2px,#0a1027 184.6px,#0f1b3e 221.1px,#182e68 252.6px,#1d4a92 281.2px,#2057a2 292.1px,#286eb3 306.9px,#3088c7 320.7px,#40a0da 332.5px,#6ec1e8 340.4px,#b5e2f4 349.2px,#caedf6 352.2px,#dcf2f8 356.2px,#e2f4f8 360.1px,#cce2f1 361.1px,#afcce5 379.8px,#95b6d7 403.5px,#8ba9c9 421.2px,#8aa5c3 434.0px,#92a8c1 467.5px,#8da4bf 485.3px,#6888ae 536.5px,#5d7fa8 564.1px,#5a7ca6 604.6px,#5a7ca6 635.1px);background-size:800px 499px;background-position:-496px 0"></div>
<div class="c" style="left:504px;background:linear-gradient(170.37deg,#06060e 25.8px,#060711 89.9px,#080a1a 146.1px,#0a1026 183.6px,#0f1a3d 220.0px,#182d67 251.6px,#1d4992 280.2px,#2057a2 291.0px,#276eb3 305.8px,#3087c6 319.6px,#3f9fd9 331.4px,#42a2db 332.4px,#6abfe7 339.3px,#aaddf2 347.2px,#c7ecf6 351.2px,#daf1f8 355.1px,#e1f4f8 359.0px,#cde3f2 360.0px,#afcbe5 379.7px,#96b6d8 402.4px,#8ba9c9 421.2px,#8aa5c3 434.0px,#92a7c1 467.5px,#8ca3be 485.2px,#6787ae 536.5px,#5d7fa8 564.1px,#5a7ca6 606.5px,#5a7ca6 636.1px);background-size:800px 499px;background-position:-504px 0"></div>
<div class="c" style="left:512px;background:linear-gradient(170.43deg,#06060e 26.7px,#060711 89.8px,#080a1a 146.0px,#0a1027 183.4px,#0f1b3e 219.9px,#182e68 251.5px,#1d4a92 280.1px,#2057a2 290.9px,#286eb3 305.7px,#2f86c6 318.5px,#40a0da 331.4px,#6fc1e8 339.2px,#88cded 342.2px,#c3eaf5 350.1px,#d3eff7 353.1px,#dcf2f8 355.0px,#e1f4f8 359.0px,#cde2f1 360.0px,#aecbe5 379.7px,#96b6d8 402.4px,#8ba9c8 421.1px,#8aa5c3 434.9px,#91a7c1 467.4px,#8ca3be 485.2px,#6888ae 535.5px,#5e7fa8 563.1px,#5a7ca6 603.5px,#5a7ca6 637.0px);background-size:800px 499px;background-position:-512px 0"></div>
<div class="c" style="left:520px;background:linear-gradient(170.48deg,#06060e 27.5px,#060711 88.6px,#080a1a 145.8px,#0a1026 182.3px,#0f1a3d 218.8px,#182d67 250.4px,#1d4991 279.0px,#2058a3 290.8px,#276eb2 304.6px,#3087c6 318.4px,#3f9fd9 330.3px,#43a2db 331.3px,#6bbfe8 338.2px,#84cbec 341.1px,#c7ebf6 350.0px,#dcf2f8 354.9px,#e2f4f8 358.9px,#cce2f1 359.9px,#b0cce6 378.6px,#96b6d8 402.3px,#8ba9c8 421.0px,#8aa5c3 435.8px,#90a6c0 467.4px,#8ba2be 485.1px,#6787ae 535.4px,#5d7fa8 564.0px,#5a7ca6 610.4px,#5a7ca6 638.0px);background-size:800px 499px;background-position:-520px 0"></div>
<div class="c" style="left:528px;background:linear-gradient(170.53deg,#06060e 28.3px,#060711 88.5px,#080a1a 144.7px,#0a1027 182.2px,#0f1b3e 218.7px,#182e68 250.3px,#1d4a92 278.9px,#2057a2 289.7px,#276db2 303.5px,#2f86c6 317.3px,#40a0da 330.2px,#6fc1e8 338.1px,#79c6ea 339.0px,#c3e9f5 348.9px,#ceeef7 350.9px,#dbf2f8 353.8px,#e1f4f8 357.8px,#cde3f2 358.8px,#afcce5 378.5px,#97b7d8 401.2px,#8aa9c8 420.9px,#8aa4c3 435.7px,#8fa5c0 467.3px,#89a1bd 486.0px,#6787ae 535.3px,#5d7fa8 563.9px,#5a7ca6 614.2px,#5a7ca6 638.9px);background-size:800px 499px;background-position:-528px 0"></div>
<div class="c" style="left:536px;background:linear-gradient(170.59deg,#06060e 29.1px,#060811 88.3px,#080a1a 144.6px,#0a1027 182.1px,#0f1b3e 218.6px,#182d67 249.1px,#1d4991 277.7px,#2058a3 289.6px,#276db2 303.4px,#3087c7 317.2px,#3f9fd9 329.0px,#49a6dd 331.0px,#6bbfe8 336.9px,#7dc8eb 338.9px,#c6ebf6 348.8px,#dcf2f8 353.7px,#e1f4f8 357.7px,#cde3f2 358.6px,#afcbe5 378.4px,#97b7d8 401.1px,#8aa8c8 420.8px,#89a4c2 436.6px,#8ea5c0 467.2px,#88a0bd 485.9px,#6787ad 535.2px,#5d7fa8 564.8px,#5b7ca6 623.0px,#5b7ca6 639.8px);background-size:800px 499px;background-position:-536px 0"></div>
<div class="c" style="left:544px;background:linear-gradient(170.64deg,#06060e 29.9px,#060711 87.2px,#080a1a 143.4px,#0a1026 180.9px,#0f1b3d 217.4px,#182e68 249.0px,#1d4a92 277.6px,#2057a2 288.4px,#276cb2 302.3px,#2f86c6 316.1px,#40a0da 328.9px,#6fc1e8 336.8px,#79c6ea 337.8px,#bbe6f4 346.7px,#c9ecf6 348.6px,#ddf2f8 353.6px,#e2f4f8 357.5px,#cde2f1 358.5px,#b0cde6 377.2px,#97b7d8 400.9px,#8aa8c8 420.7px,#89a4c2 437.4px,#8da4bf 468.0px,#869ebc 487.8px,#6787ad 534.1px,#5e7fa8 563.7px,#5b7ca6 620.0px,#5b7ca6 640.7px);background-size:800px 499px;background-position:-544px 0"></div>
<div class="c" style="left:552px;background:linear-gradient(170.69deg,#06060e 30.7px,#060711 87.0px,#080a1a 143.2px,#0a1027 180.7px,#0f1b3e 217.2px,#182d67 247.8px,#1d4991 276.4px,#2058a2 288.3px,#276db2 302.1px,#3087c7 315.9px,#3f9fd9 327.8px,#49a6dd 329.7px,#6bbfe8 335.6px,#7ec8eb 337.6px,#c5eaf6 347.5px,#dbf2f8 352.4px,#e1f4f8 356.4px,#cfe4f2 357.4px,#b0cce6 377.1px,#97b7d8 400.8px,#8aa8c8 420.5px,#89a3c2 438.3px,#8ca3bf 467.9px,#859dbb 487.6px,#6787ad 534.0px,#5e7ea7 564.6px,#5b7ca5 629.7px,#5b7ca5 641.6px);background-size:800px 499px;background-position:-552px 0"></div>
<div class="c" style="left:560px;background:linear-gradient(170.75deg,#06060e 31.5px,#060811 86.8px,#080a1a 142.0px,#0a1026 179.5px,#0f1b3d 216.0px,#182d67 247.6px,#1d4a92 276.3px,#2057a2 287.1px,#276cb1 300.9px,#2f86c6 314.7px,#40a0da 327.6px,#6ec1e8 335.5px,#82caec 337.4px,#c8ecf6 347.3px,#dcf2f8 352.3px,#e1f4f8 356.2px,#cfe4f2 357.2px,#b0cce5 376.9px,#98b7d9 399.6px,#8aa8c8 420.4px,#88a3c2 439.1px,#8aa2be 468.7px,#829cba 489.4px,#6786ad 533.9px,#5e7ea7 565.4px,#5b7ca5 642.4px);background-size:800px 499px;background-position:-560px 0"></div>
<div class="c" style="left:568px;background:linear-gradient(170.80deg,#06060e 32.2px,#060811 86.5px,#080a1a 142.8px,#0a1027 179.3px,#0f1b3e 215.8px,#182e68 247.4px,#1d4a92 276.1px,#2057a2 286.9px,#276db2 300.7px,#3087c6 314.6px,#3f9fd9 326.4px,#49a6dd 328.4px,#6abfe7 334.3px,#86ccec 337.3px,#c4eaf5 346.1px,#d6f0f7 350.1px,#ddf2f8 352.1px,#e2f4f8 356.0px,#cfe4f2 357.0px,#b0cce5 376.7px,#98b7d9 399.4px,#89a7c7 421.2px,#88a2c0 443.9px,#89a1be 469.5px,#809ab9 491.3px,#6786ad 533.7px,#5d7ea7 566.3px,#5b7ca5 643.3px);background-size:800px 499px;background-position:-568px 0"></div>
<div class="c" style="left:576px;background:linear-gradient(170.85deg,#06060e 33.0px,#060811 85.3px,#080a1a 141.6px,#0a1026 178.1px,#0f1a3d 214.6px,#182d67 246.2px,#1d4991 274.9px,#2058a3 286.7px,#276cb1 299.5px,#3088c7 314.3px,#40a0da 326.2px,#6dc1e8 334.1px,#82caec 336.1px,#c6ebf6 345.9px,#dcf2f8 350.9px,#e1f4f8 354.8px,#d1e5f3 355.8px,#c3dbed 364.7px,#acc8e3 379.5px,#98b7d9 399.3px,#89a7c7 421.0px,#87a1c0 443.7px,#88a0bd 469.3px,#7e99b8 492.1px,#6786ac 533.5px,#5d7ea6 568.1px,#5b7ca5 644.1px);background-size:800px 499px;background-position:-576px 0"></div>
<div class="c" style="left:584px;background:linear-gradient(170.91deg,#06060e 33.7px,#060811 85.0px,#080a1a 140.3px,#0a1026 177.9px,#0f1b3e 214.4px,#182e68 246.0px,#1d4a92 274.6px,#2057a2 285.5px,#276cb2 299.3px,#3087c6 313.1px,#3f9fd9 325.0px,#42a2db 326.0px,#6abee7 332.9px,#86ccec 335.8px,#c2e9f5 344.7px,#cdedf6 346.7px,#dcf2f8 350.7px,#e1f4f8 354.6px,#d2e6f3 355.6px,#c2daed 365.5px,#acc8e3 379.3px,#98b8d9 398.1px,#89a7c7 420.8px,#86a0c0 444.5px,#869fbd 470.1px,#7c97b7 493.8px,#6685ac 534.3px,#5d7da6 570.9px,#5c7ca5 644.9px);background-size:800px 499px;background-position:-584px 0"></div>
<div class="c" style="left:592px;background:linear-gradient(170.96deg,#06060e 34.4px,#060811 84.8px,#080a1a 140.1px,#0a1027 177.6px,#0f1b3e 214.1px,#182d67 244.8px,#1d4991 273.4px,#2058a3 285.2px,#276db2 299.1px,#3088c7 312.9px,#40a0da 324.7px,#6cc0e8 332.6px,#81caeb 334.6px,#a5daf1 339.6px,#caedf6 345.5px,#daf1f8 349.4px,#e2f4f8 354.4px,#d2e6f3 355.4px,#c0d9ec 366.2px,#acc8e3 379.1px,#99b8d9 397.8px,#88a6c7 421.5px,#86a0bf 446.2px,#859ebc 470.9px,#7994b6 496.6px,#6584ab 536.1px,#5d7da5 573.6px,#5c7ca5 645.7px);background-size:800px 499px;background-position:-592px 0"></div>
<div class="c" style="left:600px;background:linear-gradient(171.01deg,#06060e 35.1px,#060811 84.5px,#080a1a 139.8px,#0a1026 176.3px,#0f1b3d 212.9px,#182d67 244.5px,#1d4a92 273.1px,#2057a2 284.0px,#276cb1 297.8px,#3087c6 311.7px,#3f9fd9 323.5px,#42a2db 324.5px,#69bee7 331.4px,#71c2e9 332.4px,#85ccec 334.4px,#bbe5f4 342.3px,#c8ecf6 344.2px,#dcf2f8 349.2px,#e2f4f8 354.1px,#d3e6f3 355.1px,#c5dcee 363.0px,#adc9e4 377.8px,#99b8d9 397.6px,#88a6c7 421.3px,#859fbf 446.0px,#839dbc 471.7px,#7692b4 500.3px,#6584aa 537.8px,#5d7da5 576.4px,#5c7ca4 646.5px);background-size:800px 499px;background-position:-600px 0"></div>
<div class="c" style="left:608px;background:linear-gradient(171.07deg,#06060e 35.8px,#060811 84.2px,#080a1a 139.5px,#0a1027 176.0px,#0f1b3e 212.6px,#182d67 243.2px,#1d4991 271.9px,#2058a2 283.7px,#276db2 297.6px,#3088c7 311.4px,#40a0da 323.2px,#6cc0e8 331.1px,#8aceed 334.1px,#c4eaf5 343.0px,#d5f0f7 346.9px,#dcf2f8 348.9px,#e1f4f8 352.9px,#d5e8f4 353.9px,#c7ddef 361.8px,#adc9e4 377.6px,#99b8d9 397.3px,#88a6c7 421.0px,#849fbf 445.7px,#829cbb 472.4px,#708db0 510.9px,#6282a9 545.5px,#5d7da5 583.0px,#5c7ca4 647.3px);background-size:800px 499px;background-position:-608px 0"></div>
<div class="c" style="left:616px;background:linear-gradient(171.12deg,#06060e 36.4px,#060811 82.9px,#080a1a 138.2px,#0a1026 174.8px,#0f1b3d 211.3px,#182d67 242.9px,#1d4a92 271.6px,#2057a2 282.4px,#276eb2 297.3px,#3087c6 310.1px,#3f9fd9 322.0px,#42a2db 323.0px,#69bee7 329.9px,#70c2e9 330.9px,#8dd0ee 333.8px,#c7ebf6 342.7px,#daf2f8 347.7px,#e1f4f8 352.6px,#d6e9f4 353.6px,#c6ddee 362.5px,#adc9e4 377.3px,#99b8d9 397.1px,#88a6c7 420.8px,#839ebf 445.5px,#809aba 473.1px,#6584aa 536.4px,#5e7da5 575.9px,#5d7ca4 648.0px);background-size:800px 499px;background-position:-616px 0"></div>
<div class="c" style="left:624px;background:linear-gradient(171.17deg,#06060e 37.1px,#060811 83.5px,#080a1a 137.9px,#0a1027 174.4px,#0f1b3e 211.0px,#182e68 242.6px,#1d4a93 271.3px,#2058a2 282.1px,#276db2 296.0px,#3088c7 309.8px,#40a0da 321.7px,#6bc0e8 329.6px,#89ceed 332.5px,#abddf2 337.5px,#c9ecf6 342.4px,#dcf2f8 347.4px,#e2f4f8 352.3px,#d7e9f4 353.3px,#c7ddee 362.2px,#afcae4 376.0px,#99b8d9 396.8px,#88a5c7 421.5px,#839ebf 446.2px,#7f99ba 473.8px,#6583aa 536.1px,#5e7da5 576.6px,#5d7ca4 648.7px);background-size:800px 499px;background-position:-624px 0"></div>
<div class="c" style="left:632px;background:linear-gradient(171.23deg,#06070f 37.7px,#060811 82.2px,#080a1a 136.5px,#0a1026 173.1px,#0f1a3d 209.7px,#182d67 241.3px,#1d4a92 270.0px,#2057a2 280.8px,#276db2 295.7px,#3087c6 308.5px,#3f9fd9 320.4px,#42a2db 321.3px,#69bde7 328.3px,#6fc2e9 329.3px,#8dd0ee 332.2px,#bfe8f5 340.1px,#ceeef7 343.1px,#dcf2f8 347.0px,#e2f4f8 352.0px,#d8eaf4 353.0px,#c9deef 360.9px,#afcae4 375.7px,#9ab8da 396.5px,#88a6c7 421.2px,#829dbf 445.9px,#7e98b9 474.5px,#6583aa 534.8px,#5e7da4 576.3px,#5d7ca4 649.5px);background-size:800px 499px;background-position:-632px 0"></div>
<div class="c" style="left:640px;background:linear-gradient(171.28deg,#06070f 38.3px,#060811 82.8px,#080a1a 136.2px,#0a1027 172.8px,#0f1b3e 209.3px,#182e68 241.0px,#1d4a92 269.6px,#2058a2 280.5px,#276cb1 294.3px,#3088c7 308.2px,#40a0da 320.0px,#6bbfe8 327.9px,#91d1ee 331.9px,#c8ecf6 340.8px,#ddf2f8 346.7px,#e1f4f8 350.7px,#dbecf5 351.7px,#cbe0f0 359.6px,#afcae4 375.4px,#9ab8da 396.1px,#88a6c7 420.9px,#829dbf 445.6px,#7c97b8 476.2px,#6684aa 533.5px,#5f7da4 576.0px,#5e7ca3 650.2px);background-size:800px 499px;background-position:-640px 0"></div>
<div class="c" style="left:648px;background:linear-gradient(171.33deg,#06070f 38.9px,#060811 82.4px,#080a1a 135.8px,#0a1026 171.4px,#0f1a3d 208.0px,#182d67 239.6px,#1d4992 268.3px,#2058a3 280.1px,#276db2 294.0px,#2f86c6 306.8px,#3f9fd9 318.7px,#42a1db 319.7px,#6ec1e8 327.6px,#95d3ef 331.5px,#c9ecf6 340.4px,#dbf2f8 345.4px,#e1f4f8 350.3px,#dcecf5 351.3px,#cbdfef 360.2px,#b0cae4 375.0px,#9bb9da 395.8px,#88a5c7 421.5px,#829dbf 446.2px,#7b96b7 477.9px,#6785aa 528.3px,#5f7da4 572.8px,#5e7ca3 650.9px);background-size:800px 499px;background-position:-648px 0"></div>
<div class="c" style="left:656px;background:linear-gradient(171.39deg,#06070f 39.5px,#060811 82.0px,#080a1a 134.4px,#0a1027 171.0px,#0f1b3e 207.6px,#182e68 239.2px,#1d4a92 267.9px,#2057a2 278.8px,#276db2 293.6px,#3087c7 306.5px,#40a0da 318.3px,#6abfe7 326.2px,#90d1ee 330.2px,#a4daf1 333.2px,#c6ebf6 339.1px,#dcf2f8 345.0px,#e1f4f8 350.0px,#ddecf6 351.0px,#cadeef 360.8px,#b2cbe5 373.7px,#9bb9da 395.5px,#88a5c8 421.2px,#819cbf 445.9px,#7a95b7 478.5px,#6986ab 523.0px,#5f7da4 569.5px,#5e7ca3 651.5px);background-size:800px 499px;background-position:-656px 0"></div>
<div class="c" style="left:664px;background:linear-gradient(171.44deg,#06070f 40.1px,#060812 82.6px,#080a1a 134.0px,#0a1027 170.6px,#0f1a3d 206.2px,#182d67 237.9px,#1d4991 266.5px,#2058a3 278.4px,#276cb1 292.2px,#2f86c6 305.1px,#41a1da 318.0px,#6dc0e8 325.9px,#94d2ef 329.8px,#bde7f5 336.7px,#c8ecf6 338.7px,#dcf2f8 344.7px,#e2f4f8 349.6px,#deedf6 350.6px,#cbdfef 360.5px,#b2cce5 373.3px,#9bb8da 396.1px,#88a5c7 421.8px,#819cbf 446.5px,#7993b6 480.1px,#6a86ab 520.7px,#607da4 569.1px,#5e7ca3 652.2px);background-size:800px 499px;background-position:-664px 0"></div>
<div class="c" style="left:672px;background:linear-gradient(171.49deg,#06070f 40.6px,#060812 82.2px,#080a1a 133.6px,#0a1026 169.2px,#0f1b3e 205.8px,#182e68 237.5px,#1d4a92 266.1px,#2057a2 277.0px,#276db2 291.8px,#3087c6 304.7px,#409fda 316.6px,#69bee7 324.5px,#71c2e9 325.5px,#97d4ef 329.4px,#c5eaf6 337.3px,#dbf2f8 343.3px,#e2f4f8 349.2px,#deedf6 350.2px,#ccdfef 360.1px,#b3cce5 372.9px,#9cb9da 395.7px,#88a5c7 422.4px,#819cbe 448.1px,#7791b4 483.7px,#6784a9 530.2px,#607da3 575.7px,#5f7ca2 652.8px);background-size:800px 499px;background-position:-672px 0"></div>
<div class="c" style="left:680px;background:linear-gradient(171.55deg,#06070f 41.2px,#060812 83.7px,#080a1a 133.2px,#0a1027 168.8px,#0f1b3e 205.4px,#182d67 236.0px,#1d4991 264.7px,#2058a3 276.6px,#276eb2 291.4px,#3088c7 304.3px,#40a0da 316.2px,#6bbfe8 324.1px,#9ad6f0 329.0px,#c7ebf6 336.9px,#dcf2f8 342.9px,#e1f4f8 347.8px,#e1eff7 348.8px,#cde0ef 359.7px,#b4cce6 372.5px,#9db9da 395.3px,#89a5c8 422.0px,#819cbe 447.7px,#7690b3 485.3px,#6682a8 536.7px,#607da3 578.3px,#5f7ca2 653.5px);background-size:800px 499px;background-position:-680px 0"></div>
<div class="c" style="left:688px;background:linear-gradient(171.60deg,#06070f 41.7px,#060812 84.2px,#080a1a 132.7px,#0a1026 167.3px,#0f1b3d 204.0px,#182d67 235.6px,#1d4a92 264.3px,#2057a2 275.2px,#276eb3 291.0px,#2f86c6 302.9px,#3f9fd9 314.8px,#48a6dd 316.7px,#6ec1e8 323.7px,#9dd7f0 328.6px,#c9ecf6 336.5px,#dcf2f8 342.5px,#e1f4f8 347.4px,#e2f0f7 348.4px,#bdd4e9 367.2px,#b4cce6 373.1px,#9ebadb 394.9px,#89a5c8 422.6px,#819bbe 449.3px,#748eb1 488.9px,#6480a6 545.3px,#607da3 584.8px,#5f7ca2 654.1px);background-size:800px 499px;background-position:-688px 0"></div>
<div class="c" style="left:696px;background:linear-gradient(171.66deg,#06070f 42.2px,#070813 86.7px,#080b1b 134.2px,#0a1027 166.9px,#0f1b3e 203.5px,#182e68 235.2px,#1d4a92 263.9px,#2058a2 274.7px,#286fb3 290.6px,#3087c7 302.4px,#40a0da 314.3px,#6abfe7 322.2px,#98d4ef 327.2px,#a5dbf2 329.2px,#caecf6 336.1px,#dcf2f8 342.0px,#e1f4f8 347.0px,#e3f0f7 348.0px,#c0d6eb 365.8px,#b6cde6 371.7px,#a0bbdc 393.5px,#89a5c8 423.1px,#809abc 454.8px,#6f8aae 501.3px,#627ea3 562.7px,#607ca2 654.7px);background-size:800px 499px;background-position:-696px 0"></div>
<div class="c" style="left:704px;background:linear-gradient(171.71deg,#06070f 42.7px,#070813 90.2px,#080b1c 137.7px,#0a1027 166.4px,#0f1a3d 202.0px,#182d67 233.7px,#1d4991 262.4px,#2058a3 274.3px,#276db2 289.1px,#3088c7 302.0px,#41a1da 313.9px,#6cc0e8 321.8px,#9bd6f0 326.7px,#b7e4f4 331.7px,#c7ecf6 334.6px,#dbf2f8 340.6px,#e2f4f8 346.5px,#e4f1f7 347.5px,#c4d8ec 364.3px,#b8cfe7 370.3px,#a1bcdc 393.0px,#8aa5c8 423.7px,#748eb1 487.0px,#6580a5 546.4px,#617da2 588.0px,#607ca1 655.3px);background-size:800px 499px;background-position:-704px 0"></div>
<div class="c" style="left:712px;background:linear-gradient(171.76deg,#06070f 43.2px,#070814 94.7px,#080c1d 140.2px,#0b1027 165.9px,#0f1b3e 201.6px,#182e68 233.2px,#1d4a92 261.9px,#2057a2 272.8px,#276eb3 288.6px,#3087c6 300.5px,#3f9fd9 312.4px,#4eaadf 315.4px,#6fc2e9 321.3px,#9ed7f0 326.3px,#c8ecf6 334.2px,#dcf2f8 340.1px,#e2f4f8 346.0px,#e5f1f8 347.0px,#c9dcee 361.9px,#b9cfe7 369.8px,#a3bddd 391.6px,#8ba5c8 423.2px,#738cb0 488.6px,#637fa4 554.9px,#607ca1 635.0px,#607ca1 655.8px);background-size:800px 499px;background-position:-712px 0"></div>
<div class="c" style="left:720px;background:linear-gradient(171.82deg,#06070f 43.7px,#070916 108.0px,#090e22 153.5px,#0c132d 175.3px,#0f1b3e 201.0px,#182d67 231.7px,#1d4991 260.4px,#2058a3 272.3px,#266aaf 285.2px,#2c7dbf 295.1px,#318ac9 301.0px,#40a0da 311.9px,#6abfe7 319.8px,#a1d9f1 325.8px,#c9ecf6 333.7px,#dcf2f8 339.6px,#e2f4f8 345.6px,#e6f1f8 346.6px,#caddee 361.4px,#bad0e8 369.3px,#a4bede 391.1px,#8ba5c8 423.8px,#738caf 489.1px,#637ea3 561.3px,#617ca1 656.4px);background-size:800px 499px;background-position:-720px 0"></div>
<div class="c" style="left:728px;background:linear-gradient(171.87deg,#06070f 44.1px,#070917 113.4px,#0a0f24 159.0px,#0f1b3d 199.5px,#182d67 231.2px,#1d4a92 259.9px,#2057a2 270.8px,#266ab0 284.7px,#2d82c2 296.6px,#3e9dd8 309.4px,#42a1db 311.4px,#6cc0e8 319.3px,#a3daf1 325.3px,#c7ebf6 332.2px,#dcf2f8 339.1px,#e1f4f8 344.1px,#e9f3f9 345.1px,#cedfef 359.9px,#bbd1e8 368.8px,#a6c0df 389.6px,#8ca6c9 423.3px,#718aad 494.5px,#637ea2 564.8px,#617ca1 656.9px);background-size:800px 499px;background-position:-728px 0"></div>
<div class="c" style="left:736px;background:linear-gradient(171.92deg,#06070f 44.6px,#070a18 118.8px,#0a0f25 159.4px,#0f1b3e 199.0px,#182e68 230.7px,#1d4a92 259.4px,#2057a2 270.3px,#266bb0 284.2px,#2e84c4 297.0px,#3e9ed8 308.9px,#409fda 309.9px,#69bee7 317.8px,#6fc2e9 318.8px,#9dd7f0 323.8px,#a5dbf2 324.7px,#c8ecf6 331.7px,#dbf2f8 337.6px,#e1f4f8 343.6px,#e9f3f9 344.6px,#cfe0ef 359.4px,#bdd2e9 367.3px,#a8c1df 389.1px,#8da6c9 423.8px,#728aad 494.1px,#637ea2 565.3px,#627ca0 657.4px);background-size:800px 499px;background-position:-736px 0"></div>
<div class="c" style="left:744px;background:linear-gradient(171.98deg,#06070f 45.0px,#070a19 119.2px,#0a1025 159.8px,#0f1b3e 198.5px,#182e68 230.1px,#1d4a92 258.9px,#2058a2 269.8px,#276eb3 285.6px,#3087c7 297.5px,#3f9ed9 308.4px,#40a0da 309.4px,#6abfe7 317.3px,#a0d8f1 323.2px,#acdef3 325.2px,#c9ecf6 331.1px,#dcf2f8 337.1px,#e1f4f8 343.0px,#eaf4f9 344.0px,#d3e2f0 357.9px,#bfd3e9 366.8px,#a9c1e0 388.6px,#8fa7ca 423.2px,#728aad 492.6px,#647ea2 565.8px,#627ca0 657.9px);background-size:800px 499px;background-position:-744px 0"></div>
<div class="c" style="left:752px;background:linear-gradient(172.03deg,#06070f 45.4px,#070a19 118.7px,#0a1026 159.3px,#0f1b3e 197.9px,#182d67 228.6px,#1d4991 257.3px,#2058a3 269.2px,#266aaf 282.1px,#2c7abd 291.0px,#3088c7 296.9px,#3f9fd9 307.8px,#41a1da 308.8px,#6bc0e8 316.7px,#a2d9f1 322.7px,#aedff3 324.7px,#caedf6 330.6px,#dcf2f8 336.5px,#e2f4f8 342.5px,#ebf4f9 343.5px,#d3e3f0 357.3px,#bfd3e9 366.3px,#aac2e1 387.1px,#8fa7ca 422.7px,#728aad 492.0px,#647ea2 566.3px,#627ca0 658.4px);background-size:800px 499px;background-position:-752px 0"></div>
<div class="c" style="left:760px;background:linear-gradient(172.09deg,#06070f 45.8px,#070a19 119.1px,#0a1026 158.7px,#0f1b3e 197.3px,#182d67 228.0px,#1d4991 256.7px,#2058a3 268.6px,#266aaf 281.5px,#2c7bbd 290.4px,#3088c7 296.4px,#3f9fd9 307.3px,#42a2db 308.3px,#6dc1e8 316.2px,#a4daf1 322.1px,#c3e9f5 328.1px,#ceeef7 331.0px,#dcf2f8 336.0px,#e2f4f8 341.9px,#ebf4f9 342.9px,#d3e2f0 356.8px,#bfd3e9 365.7px,#aac2e1 386.5px,#8fa7ca 422.2px,#728aad 491.5px,#647ea2 566.8px,#627ca0 658.9px);background-size:800px 499px;background-position:-760px 0"></div>
<div class="c" style="left:768px;background:linear-gradient(172.14deg,#06070f 46.2px,#070a19 118.5px,#0a1026 158.1px,#0f1a3d 195.7px,#182d67 227.4px,#1d4991 256.2px,#2058a3 268.0px,#266aaf 280.9px,#2c7dbf 290.8px,#3188c8 295.8px,#409fda 306.7px,#69bee7 314.6px,#70c2e9 315.6px,#a7dbf2 321.5px,#c9ecf6 328.5px,#dcf2f8 335.4px,#e2f4f8 341.4px,#ebf4f9 342.3px,#d3e2f0 356.2px,#bfd3e9 365.1px,#aac2e1 385.9px,#8ea7ca 421.6px,#7289ad 489.9px,#647ea2 566.2px,#627ca0 659.3px);background-size:800px 499px;background-position:-768px 0"></div>
<div class="c" style="left:776px;background:linear-gradient(172.19deg,#06070f 46.5px,#070a19 117.8px,#0a1026 157.5px,#0f1a3d 195.1px,#182d67 226.8px,#1d4a92 255.6px,#2057a2 266.5px,#266ab0 280.3px,#2c7ebf 290.2px,#3189c8 295.2px,#40a0da 306.1px,#6abfe7 314.0px,#a9dcf2 320.9px,#c9ecf6 327.9px,#ddf2f8 334.8px,#e2f4f8 340.8px,#ebf4f9 341.8px,#d3e2f0 355.6px,#bfd3e9 364.5px,#aac2e1 385.3px,#8ea7ca 421.0px,#7189ad 489.4px,#647ea2 565.7px,#627ca0 659.8px);background-size:800px 499px;background-position:-776px 0"></div>
<div class="c" style="left:784px;background:linear-gradient(172.25deg,#06070f 46.9px,#070a19 117.2px,#0a1026 156.8px,#0f1b3d 194.5px,#182d67 226.2px,#1d4a92 254.9px,#2057a2 265.8px,#266ab0 279.7px,#2c7ebf 289.6px,#3189c8 294.6px,#40a0da 305.5px,#6bc0e8 313.4px,#aaddf2 320.3px,#caedf6 327.3px,#dbf2f8 333.2px,#e2f4f8 340.2px,#ebf4f9 341.1px,#d3e2f0 355.0px,#bfd3e9 363.9px,#abc3e1 383.8px,#8ea7ca 420.4px,#7189ac 488.8px,#647ea2 566.1px,#627ca0 660.2px);background-size:800px 499px;background-position:-784px 0"></div>
<div class="c" style="left:792px;background:linear-gradient(172.30deg,#06070f 47.2px,#080a19 116.6px,#0a1026 156.2px,#0f1b3d 193.9px,#182e68 225.6px,#1d4a92 254.3px,#2057a2 265.2px,#2569af 278.1px,#2a73b7 284.0px,#3087c7 293.0px,#3f9fd9 303.9px,#41a1da 304.8px,#6dc0e8 312.8px,#a4daf1 318.7px,#acdef3 319.7px,#c8ecf6 325.7px,#dcf2f8 332.6px,#e1f4f8 338.5px,#edf5fa 339.5px,#d5e4f1 353.4px,#bfd3e9 363.3px,#abc3e1 383.1px,#8ea7ca 419.8px,#7189ac 488.2px,#647ea2 565.5px,#627ca0 660.6px);background-size:800px 499px;background-position:-792px 0"></div></div><!--/BG-->
<svg class="abs" style="left:0;top:0" width="800" height="499"><circle cx="154.0" cy="29.4" r="1" fill="#c8d4ff" opacity=".85"/><circle cx="76.0" cy="86.6" r="1" fill="#c8d4ff" opacity=".85"/><circle cx="263.5" cy="25.6" r="1" fill="#c8d4ff" opacity=".85"/><circle cx="372.6" cy="84.7" r="1" fill="#c8d4ff" opacity=".85"/><circle cx="149.6" cy="259.5" r="1" fill="#c8d4ff" opacity=".85"/><circle cx="324.4" cy="178.2" r="1" fill="#c8d4ff" opacity=".85"/><circle cx="756.4" cy="165.6" r="1" fill="#c8d4ff" opacity=".85"/><circle cx="179.0" cy="36.6" r="1" fill="#c8d4ff" opacity=".85"/><circle cx="73.0" cy="63.3" r="1" fill="#c8d4ff" opacity=".85"/><circle cx="185.5" cy="91.6" r=".75" fill="#b8c8f0" opacity=".6"/><circle cx="21.0" cy="57.0" r=".75" fill="#b8c8f0" opacity=".6"/><circle cx="254.7" cy="29.4" r=".75" fill="#b8c8f0" opacity=".6"/><circle cx="384.6" cy="133.4" r=".75" fill="#b8c8f0" opacity=".6"/><circle cx="454.4" cy="135.0" r=".75" fill="#b8c8f0" opacity=".6"/><circle cx="39.0" cy="214.6" r=".75" fill="#b8c8f0" opacity=".6"/><circle cx="69.5" cy="243.0" r=".75" fill="#b8c8f0" opacity=".6"/><circle cx="202.0" cy="269.7" r=".75" fill="#b8c8f0" opacity=".6"/><circle cx="306.0" cy="208.0" r=".75" fill="#b8c8f0" opacity=".6"/><circle cx="387.0" cy="234.4" r=".75" fill="#b8c8f0" opacity=".6"/><circle cx="734.6" cy="30.5" r=".75" fill="#b8c8f0" opacity=".6"/><circle cx="755.7" cy="36.8" r=".75" fill="#b8c8f0" opacity=".6"/><circle cx="735.6" cy="106.0" r=".75" fill="#b8c8f0" opacity=".6"/><circle cx="763.0" cy="185.0" r=".75" fill="#b8c8f0" opacity=".6"/><circle cx="6.0" cy="310.0" r=".75" fill="#b8c8f0" opacity=".6"/><circle cx="34.0" cy="316.0" r=".75" fill="#b8c8f0" opacity=".6"/><circle cx="15.6" cy="331.0" r=".75" fill="#b8c8f0" opacity=".6"/><circle cx="94.0" cy="234.5" r=".75" fill="#b8c8f0" opacity=".6"/><circle cx="236.0" cy="282.0" r=".75" fill="#b8c8f0" opacity=".6"/><circle cx="712.6" cy="156.8" r=".75" fill="#b8c8f0" opacity=".6"/><circle cx="12.6" cy="27.8" r=".6" fill="#a0b0d8" opacity=".4"/><circle cx="206.0" cy="22.4" r=".6" fill="#a0b0d8" opacity=".4"/><circle cx="129.0" cy="150.0" r=".6" fill="#a0b0d8" opacity=".4"/><circle cx="32.0" cy="148.0" r=".6" fill="#a0b0d8" opacity=".4"/><circle cx="59.0" cy="131.6" r=".6" fill="#a0b0d8" opacity=".4"/><circle cx="226.0" cy="128.0" r=".6" fill="#a0b0d8" opacity=".4"/><circle cx="244.0" cy="96.0" r=".6" fill="#a0b0d8" opacity=".4"/><circle cx="152.5" cy="84.0" r=".6" fill="#a0b0d8" opacity=".4"/><circle cx="42.0" cy="33.4" r=".6" fill="#a0b0d8" opacity=".4"/><circle cx="85.0" cy="46.0" r=".6" fill="#a0b0d8" opacity=".4"/><circle cx="178.0" cy="50.7" r=".6" fill="#a0b0d8" opacity=".4"/><circle cx="234.0" cy="66.5" r=".6" fill="#a0b0d8" opacity=".4"/><circle cx="273.6" cy="108.0" r=".6" fill="#a0b0d8" opacity=".4"/><circle cx="270.0" cy="117.7" r=".6" fill="#a0b0d8" opacity=".4"/><circle cx="424.5" cy="70.5" r=".6" fill="#a0b0d8" opacity=".4"/><circle cx="407.0" cy="44.4" r=".6" fill="#a0b0d8" opacity=".4"/><circle cx="473.0" cy="140.0" r=".6" fill="#a0b0d8" opacity=".4"/><circle cx="470.0" cy="123.7" r=".6" fill="#a0b0d8" opacity=".4"/><circle cx="201.0" cy="296.0" r=".6" fill="#a0b0d8" opacity=".4"/><circle cx="181.6" cy="178.7" r=".6" fill="#a0b0d8" opacity=".4"/><circle cx="215.0" cy="181.0" r=".6" fill="#a0b0d8" opacity=".4"/><circle cx="18.7" cy="194.0" r=".6" fill="#a0b0d8" opacity=".4"/><circle cx="38.0" cy="185.0" r=".6" fill="#a0b0d8" opacity=".4"/><circle cx="370.7" cy="227.0" r=".6" fill="#a0b0d8" opacity=".4"/><circle cx="279.8" cy="199.0" r=".6" fill="#a0b0d8" opacity=".4"/><circle cx="404.0" cy="225.5" r=".6" fill="#a0b0d8" opacity=".4"/><circle cx="379.0" cy="177.6" r=".6" fill="#a0b0d8" opacity=".4"/><circle cx="404.7" cy="177.6" r=".6" fill="#a0b0d8" opacity=".4"/><circle cx="283.0" cy="226.0" r=".6" fill="#a0b0d8" opacity=".4"/><circle cx="752.0" cy="29.8" r=".6" fill="#a0b0d8" opacity=".4"/><circle cx="698.8" cy="70.0" r=".6" fill="#a0b0d8" opacity=".4"/><circle cx="702.6" cy="125.0" r=".6" fill="#a0b0d8" opacity=".4"/><circle cx="691.0" cy="177.8" r=".6" fill="#a0b0d8" opacity=".4"/><circle cx="693.8" cy="143.0" r=".6" fill="#a0b0d8" opacity=".4"/></svg>
<svg class="abs" style="left:0;top:0" width="800" height="499" viewBox="0 0 800 499">
<defs><filter id="bl" x="-10%" y="-50%" width="120%" height="200%"><feGaussianBlur stdDeviation="1.6"/></filter><filter id="bl3" x="-20%" y="-100%" width="140%" height="300%"><feGaussianBlur stdDeviation="5"/></filter><filter id="bl2" x="-10%" y="-50%" width="120%" height="200%"><feGaussianBlur stdDeviation="1.4"/></filter></defs>
<g filter="url(#bl)">
<path d="M-5 427 L75 410 L150 393 L187 377 L210 368 L255 363 L275 366 L272 378 L259 381 L225 383 L195 389 L169 407 L150 411 L75 428 L-5 443Z" fill="#adb6d2" opacity=".7"/>
</g>
<g filter="url(#bl2)" fill="none" stroke="#c4d0e6" stroke-linecap="round">
<path d="M0 414 Q60 398 150 375" stroke-width="2.6" opacity=".45"/>
<path d="M86 377 L180 362" stroke-width="2.4" opacity=".35"/>
<path d="M271 382 Q360 362 443 348" stroke-width="3" opacity=".4"/>
<path d="M240 354 L293 345" stroke-width="2.4" opacity=".3"/>
<path d="M252 370 L337 361" stroke-width="2.4" opacity=".35"/>
</g>
<g filter="url(#bl3)" fill="#a8b4c8">
<path d="M320 418 L420 388 L560 352 L690 322 L700 338 L570 372 L430 406 L330 434Z" opacity=".42"/>
<path d="M300 448 L400 420 L540 385 L560 398 L420 436 L310 462Z" opacity=".3"/>
<path d="M440 440 L560 410 L640 392 L650 402 L570 425 L450 455Z" opacity=".22"/>
</g>
</svg>
<div id="menubar" class="abs"></div>
<svg class="abs" style="left:12.8px;top:2.2px" width="7.2" height="8.6" viewBox="0 0 14 17"><path fill="#1a1a1a" d="M11.6 9c0-2 1.7-3 1.8-3.1-1-1.4-2.5-1.6-3-1.7-1.3-.1-2.5.8-3.1.8-.7 0-1.7-.8-2.7-.8C3.2 4.2 1.9 5 1.2 6.3-.3 8.9.8 12.7 2.2 14.8c.7 1 1.5 2.1 2.6 2.1 1 0 1.4-.7 2.7-.7 1.2 0 1.6.7 2.7.7 1.1 0 1.8-1 2.5-2 .8-1.2 1.1-2.3 1.1-2.4 0 0-2.2-.9-2.2-3.5zM9.6 2.9c.6-.7 1-1.7.9-2.7-.8 0-1.9.6-2.5 1.3-.5.6-1 1.6-.9 2.6.9.1 1.9-.5 2.5-1.2z"/></svg>
<div class="mb" style="left:31px;font-weight:bold;color:#1e1e1e;font-size:7.8px">Finder</div>
<div class="mb" style="left:66px;font-size:6.95px">ファイル</div>
<div class="mb" style="left:104.5px;font-size:6.95px">編集</div>
<div class="mb" style="left:128.8px;font-size:6.95px">表示</div>
<div class="mb" style="left:153.3px;font-size:6.95px">移動</div>
<div class="mb" style="left:177.8px;font-size:6.95px">ウインドウ</div>
<div class="mb" style="left:223px;font-size:6.95px">ヘルプ</div>
<div class="mb" style="left:560.6px;font-size:7.3px">MONA ¥1,118.99</div>
<div class="mb" style="left:657px;font-size:7px;letter-spacing:-.3px">100%</div>
<div class="mb" style="left:716.8px;font-size:7.6px">午前1:20</div>
<svg class="abs" style="left:625.5px;top:3px" width="6" height="8" viewBox="0 0 6 8"><path d="M1 2.2L4.6 5.6 3 7.2V.8L4.6 2.4 1 5.8" fill="none" stroke="#2a2a2a" stroke-width=".8"/></svg>
<svg class="abs" style="left:639.5px;top:3px" width="10.5" height="8" viewBox="0 0 10.5 8"><path d="M.7 3A6.5 6.5 0 0 1 9.8 3M2.2 4.5A4.4 4.4 0 0 1 8.3 4.5M3.7 6A2.2 2.2 0 0 1 6.8 6" fill="none" stroke="#2a2a2a" stroke-width=".9"/><circle cx="5.25" cy="7.3" r=".6" fill="#2a2a2a"/></svg>
<div class="abs" style="left:676.3px;top:4.2px;width:11px;height:5.8px;background:#3a3a3a;border-radius:1px"></div>
<div class="abs" style="left:687.5px;top:5.8px;width:1.3px;height:2.6px;background:#3a3a3a"></div>
<svg class="abs" style="left:676.3px;top:4.2px" width="11" height="5.8" viewBox="0 0 11 5.8"><path d="M6.2 .4L3.6 3.2H5.4L4.6 5.4 7.4 2.5H5.6Z" fill="#c8c8cc"/></svg>
<div class="abs" style="left:697px;top:2.6px;width:8.8px;height:8.6px;background:#1b1b1b;border-radius:1.5px;color:#eee;font-size:6.5px;line-height:8.8px;text-align:center">A</div>
<svg class="abs" style="left:759.5px;top:3.3px" width="8.5" height="8" viewBox="0 0 8.5 8"><circle cx="3.2" cy="3.2" r="2.5" fill="none" stroke="#2a2a2a" stroke-width=".95"/><path d="M5 5L8 7.8" stroke="#2a2a2a" stroke-width="1.1"/></svg>
<svg class="abs" style="left:776px;top:3.8px" width="11" height="6.8" viewBox="0 0 11 6.8"><path d="M0 .5H11M2.5 2.3H11M2.5 4.1H11M0 5.9H11" stroke="#2a2a2a" stroke-width=".9"/><path d="M0 2.3H1.5M0 4.1H1.5" stroke="#2a2a2a" stroke-width=".9"/></svg>
<svg class="abs" style="left:570px;top:12px" width="32" height="10" viewBox="570 12 32 10"><path d="M573 20.6C578.5 20.6 580.5 19 583 15.6Q585.5 13 588 15.6C590.5 19 592.5 20.6 598 20.6Z" fill="#fff"/></svg>
<div id="popover" class="abs">
<div class="abs" style="left:11px;top:8.7px;width:9.5px;height:1px;background:#9a9a9a;box-shadow:0 3.6px 0 #9a9a9a,0 7.2px 0 #9a9a9a"></div>
<div class="abs" style="left:0;width:194px;top:9.8px;text-align:center;font-size:7px;line-height:8px;color:#3fcdb5;font-weight:bold">コイン相場</div>
<div class="abs" style="left:177px;top:12.3px;width:9.8px;height:1.1px;background:#52d0b3"></div>
<div class="abs" style="left:181.35px;top:7.5px;width:1.1px;height:9.8px;background:#52d0b3"></div>
<div class="row" style="top:24.1px"><span class="sym">BTC<i>JPY</i></span><span class="ex">bitFlyer</span><span class="price">1,778,110.00</span><span class="pct up"><b></b>1.62%</span></div>
<div class="abs" style="left:0;top:49.6px;width:194px;height:30.6px;background:#f3f3f4"></div>
<div class="row hl" style="top:51.8px"><span class="sym">MONA<i>JPY</i></span><span class="ex">bitbank</span><span class="price">1,118.99</span><span class="pct down"><b></b>5.17%</span></div>
<div class="row" style="top:79.5px"><span class="sym">BCH<i>JPY</i></span><span class="ex">bitFlyer</span><span class="price">301,296.00</span><span class="pct down"><b></b>2.08%</span></div>
<div class="row" style="top:107.2px"><span class="sym">BCH<i>JPY</i></span><span class="ex">Zaif</span><span class="price">299,000.00</span><span class="pct down"><b></b>2.16%</span></div>
<div class="row" style="top:134.9px"><span class="sym">ETH<i>JPY</i></span><span class="ex">CoinCheck</span><span class="price">120,069.93</span><span class="pct up"><b></b>17.68%</span></div>
<div class="row" style="top:162.6px"><span class="sym">ETH<i>JPY</i></span><span class="ex">Zaif</span><span class="price">128,000.00</span><span class="pct up"><b></b>22.28%</span></div>
<div class="row" style="top:190.2px"><span class="sym">ETH<i>JPY</i></span><span class="ex">bitFlyer</span><span class="price">123,134.12</span><span class="pct up"><b></b>20.52%</span></div>
<div class="row" style="top:217.9px"><span class="sym">BCH<i>JPY</i></span><span class="ex">bitbank</span><span class="price">299,107.00</span><span class="pct down"><b></b>2.10%</span></div>
</div>
<div id="grayr" class="abs"></div>
<div id="dock" class="abs"></div>
<svg class="abs" style="left:0;top:460px" width="800" height="39" viewBox="0 460 800 39">
<defs>
<filter id="sb" x="-50%" y="-50%" width="200%" height="200%"><feGaussianBlur stdDeviation="1.2"/></filter>
<linearGradient id="gPrev" x1="0" y1="0" x2="0" y2="1"><stop offset="0" stop-color="#3a80d0"/><stop offset="1" stop-color="#8cc8ee"/></linearGradient>
<linearGradient id="gFinderL" x1="0" y1="0" x2="0" y2="1"><stop offset="0" stop-color="#49b2f5"/><stop offset="1" stop-color="#1c6fe0"/></linearGradient>
<linearGradient id="gFinderR" x1="0" y1="0" x2="0" y2="1"><stop offset="0" stop-color="#f4f7fb"/><stop offset="1" stop-color="#d8e2ee"/></linearGradient>
<radialGradient id="gSiri" cx=".5" cy=".6" r=".6"><stop offset="0" stop-color="#d050c0"/><stop offset=".35" stop-color="#6a3aa8"/><stop offset=".7" stop-color="#1a2a58"/><stop offset="1" stop-color="#101830"/></radialGradient>
<linearGradient id="gLaunch" x1="0" y1="0" x2="0" y2="1"><stop offset="0" stop-color="#a9aaae"/><stop offset="1" stop-color="#85868a"/></linearGradient>
<linearGradient id="gSafari" x1="0" y1="0" x2="0" y2="1"><stop offset="0" stop-color="#35a8f5"/><stop offset="1" stop-color="#1a6ad8"/></linearGradient>
<linearGradient id="gMsg" x1="0" y1="0" x2="0" y2="1"><stop offset="0" stop-color="#5ac0fa"/><stop offset="1" stop-color="#1a80f0"/></linearGradient>
<linearGradient id="gFT" x1="0" y1="0" x2="0" y2="1"><stop offset="0" stop-color="#5ee070"/><stop offset="1" stop-color="#22b43c"/></linearGradient>
<linearGradient id="gBooks" x1="0" y1="0" x2="0" y2="1"><stop offset="0" stop-color="#f8a030"/><stop offset="1" stop-color="#e86018"/></linearGradient>
<linearGradient id="gApp" x1="0" y1="0" x2="0" y2="1"><stop offset="0" stop-color="#2ca8f8"/><stop offset="1" stop-color="#1a68e0"/></linearGradient>
<linearGradient id="gRed" x1="0" y1="0" x2="0" y2="1"><stop offset="0" stop-color="#d62a38"/><stop offset="1" stop-color="#a81a24"/></linearGradient>
<linearGradient id="gSys" x1="0" y1="0" x2="0" y2="1"><stop offset="0" stop-color="#b8b8bc"/><stop offset="1" stop-color="#8c8c90"/></linearGradient>
<linearGradient id="gLine" x1="0" y1="0" x2="0" y2="1"><stop offset="0" stop-color="#3ad04a"/><stop offset="1" stop-color="#20b030"/></linearGradient>
<linearGradient id="gShield" x1="0" y1="0" x2="0" y2="1"><stop offset="0" stop-color="#9a8668"/><stop offset="1" stop-color="#6e5c48"/></linearGradient>
<radialGradient id="gBlue" cx=".5" cy=".4" r=".6"><stop offset="0" stop-color="#4a98e8"/><stop offset="1" stop-color="#2a70d0"/></radialGradient>
<linearGradient id="gFolder" x1="0" y1="0" x2="0" y2="1"><stop offset="0" stop-color="#78c8f0"/><stop offset="1" stop-color="#50b0e8"/></linearGradient>
<linearGradient id="gTrash" x1="0" y1="0" x2="1" y2="0"><stop offset="0" stop-color="#e4e6e8"/><stop offset=".5" stop-color="#f4f4f4"/><stop offset="1" stop-color="#c8cacc"/></linearGradient>
<linearGradient id="gItunes" x1="0" y1="0" x2="1" y2="1"><stop offset="0" stop-color="#f060a0"/><stop offset="1" stop-color="#7060e0"/></linearGradient>
</defs>
<!-- Finder -->
<rect x="37" y="470" width="21" height="20.5" rx="1.5" fill="url(#gFinderR)"/>
<path d="M38.5 470H49.5L46.8 480.5H49.5L48.5 490.5H38.5A1.5 1.5 0 0 1 37 489V471.5A1.5 1.5 0 0 1 38.5 470Z" fill="url(#gFinderL)"/>
<path d="M41.5 484.5Q47.5 488.5 54 484.5" fill="none" stroke="#1a3050" stroke-width=".7"/>
<path d="M42.5 474.5V477M53 474.5V477" stroke="#1a3050" stroke-width=".8"/>
<circle cx="47.5" cy="496.5" r=".8" fill="#1a1a2a"/>
<!-- Siri -->
<circle cx="76.1" cy="480" r="11" fill="#c0c4d0"/>
<circle cx="76.1" cy="480" r="10.2" fill="#141a3a"/>
<ellipse cx="76.1" cy="477" rx="7" ry="5" fill="#b02890" opacity=".75" filter="url(#sb)"/>
<ellipse cx="72" cy="483" rx="5" ry="3.5" fill="#2aa0e0" opacity=".7" filter="url(#sb)"/>
<ellipse cx="80" cy="483" rx="4.5" ry="3" fill="#6a40c8" opacity=".7" filter="url(#sb)"/>
<path d="M69 484Q76 472 83 484" fill="none" stroke="#f0f4ff" stroke-width=".9" opacity=".85"/>
<path d="M72 486Q76 476 80 486" fill="none" stroke="#8ff0f8" stroke-width=".8" opacity=".8"/>
<!-- Launchpad -->
<circle cx="105.2" cy="480" r="11.3" fill="url(#gLaunch)"/>
<path d="M100.5 485.5L102 480Q106 473.5 112 472.5Q111 478.5 104.5 482.5Z" fill="#3a3a40"/>
<path d="M102.2 479.5L98.5 480 100.6 477.2Q102 476.5 104 477ZM105 482L104.5 485.5 107.3 483.6Q108 482.2 107.6 480.3Z" fill="#3a3a40"/>
<path d="M100.5 485.5L98.5 487.5" stroke="#5a5a60" stroke-width="1"/>
<!-- Mission control -->
<rect x="123" y="470.5" width="22" height="19.5" rx="1" fill="#17191c"/>
<rect x="125" y="472" width="8" height="5" fill="#e8883a"/>
<rect x="125" y="478.5" width="8" height="6" fill="#3a90e0"/>
<rect x="135" y="474" width="8" height="10" fill="#48c048"/>
<!-- Safari -->
<circle cx="162.6" cy="479.4" r="11.6" fill="#e6ecf4"/>
<circle cx="162.6" cy="479.4" r="10.2" fill="url(#gSafari)"/>
<path d="M169.5 472.5L163.8 480.6 161.4 478.2Z" fill="#e8383a"/>
<path d="M155.7 486.3L161.4 478.2 163.8 480.6Z" fill="#f4f4f4"/>
<!-- Brown notebook -->
<path d="M183 469.5L199 468.5 201.2 490.5 183.5 491.7Z" fill="#b88c58"/>
<path d="M198.5 470L199.5 470.2 201 489.5 200 489.7Z" fill="#d8c0a0" opacity=".6"/>
<!-- Calendar -->
<rect x="209.5" y="469" width="20.2" height="21" rx="1" fill="#f6f6f6"/>
<path d="M210.5 469H228.7A1 1 0 0 1 229.7 470V474.5H209.5V470A1 1 0 0 1 210.5 469Z" fill="#e84038"/>
<text x="219.6" y="487.5" font-size="11" text-anchor="middle" fill="#333" font-family="Liberation Sans">5</text>
<!-- Reminders -->
<path d="M240 470.5L256.5 468.5 259 489.5 242.5 491.5Z" fill="#f8f8fa"/>
<circle cx="243.5" cy="474.3" r="1" fill="#f0902a"/><circle cx="243.8" cy="477.8" r="1" fill="#2aa0f0"/><circle cx="244.1" cy="481.3" r="1" fill="#40c040"/><circle cx="244.4" cy="484.8" r="1" fill="#c050d0"/>
<!-- Preview -->
<path d="M268 470.5L285 468.5 287.5 489 270.5 491Z" fill="#eef2f8"/>
<path d="M270 472L283.8 470.4 285.8 487.2 272 488.8Z" fill="url(#gPrev)"/>
<path d="M273.5 474.5Q276 476 277 479L281 483 284 486.5 279 485.5 276.5 482Q274 478 273.5 474.5Z" fill="#6a4a2a"/>
<path d="M276 477L280 478.5 278 480.5Z" fill="#e8e0d0"/>
<path d="M272 486L285.5 484.5 285.8 487.2 272 488.8Z" fill="#c8e4f4"/>
<!-- Maps -->
<path d="M295.5 470.5L303 469 311 471 318.5 469.5V489L311 490.5 303 488.5 295.5 490Z" fill="#e8ecd8"/>
<path d="M303 469L311 471V480L303 478Z" fill="#a8dc80"/>
<path d="M311 471L318.5 469.5V476L311 478Z" fill="#c8e8a0"/>
<circle cx="302" cy="481" r="2.5" fill="#2a78e0"/>
<circle cx="313.5" cy="484" r="5" fill="#f4f4f4" stroke="#c8c8c8" stroke-width=".5"/>
<path d="M313.5 480.5L314.3 484H312.7Z" fill="#e03a3a"/>
<!-- Notes -->
<path d="M326 470.5L344 468.5 346 489.5 328 491.5Z" fill="#f6f4e8"/>
<path d="M326 470.5L344 468.5 344.4 472.5 326.4 474.5Z" fill="#f4d040"/>
<!-- Messages -->
<ellipse cx="362.5" cy="477.5" rx="9.8" ry="8" fill="url(#gMsg)"/>
<path d="M356 483L354.5 488.5 360 484.5Z" fill="#2a88f0"/>
<ellipse cx="369" cy="484" rx="6.8" ry="5" fill="#f8f8fa"/>
<circle cx="366" cy="484" r=".9" fill="#3a90f0"/><circle cx="369" cy="484" r=".9" fill="#3a90f0"/><circle cx="372" cy="484" r=".9" fill="#3a90f0"/>
<!-- FaceTime -->
<rect x="381.5" y="470" width="20" height="19" rx="2" fill="url(#gFT)"/>
<rect x="385" y="475.5" width="8" height="6.5" rx="1" fill="#f4f8f4"/>
<path d="M393 478L397 475.5V482L393 479.5Z" fill="#f4f8f4"/>
<circle cx="399" cy="486" r="5.5" fill="#e8f0e8" stroke="#c0d0c0" stroke-width=".5"/>
<path d="M397 484Q398 488 401.5 488.5" fill="none" stroke="#30b040" stroke-width="1"/>
<!-- iTunes -->
<circle cx="422" cy="479.5" r="11.3" fill="url(#gItunes)"/>
<circle cx="422" cy="479.5" r="9.6" fill="#f8f8fc"/>
<path d="M420 484.5V474.5L426 473V482.5" fill="none" stroke="#e05090" stroke-width="1.3"/>
<circle cx="418.8" cy="484.6" r="1.6" fill="#8858d8"/><circle cx="424.8" cy="482.6" r="1.6" fill="#5078e0"/>
<!-- iBooks -->
<circle cx="451.2" cy="479.3" r="11.3" fill="url(#gBooks)"/>
<path d="M444.5 474.5Q448 473.5 450.8 475V485Q448 483.5 444.5 484.5Z" fill="#fff"/>
<path d="M457.9 474.5Q454.4 473.5 451.6 475V485Q454.4 483.5 457.9 484.5Z" fill="#fff"/>
<!-- App Store -->
<circle cx="479.8" cy="479.6" r="11.3" fill="url(#gApp)"/>
<path d="M476 486L481.5 473M483.5 486L478 473M474 482.5H486" fill="none" stroke="#fff" stroke-width="1.3"/>
<!-- Red -->
<circle cx="508.5" cy="479.4" r="12" fill="#f0e8ea"/>
<circle cx="508.5" cy="479.4" r="11" fill="url(#gRed)"/>
<path d="M502 477L508.5 473 515 477 508.5 481Z" fill="#fff"/>
<path d="M502 478.5L508 482V486L502 482.5ZM515 478.5L509 482V486L515 482.5Z" fill="#fff"/>
<!-- System Prefs -->
<rect x="525.7" y="469.5" width="23.3" height="21" rx="1" fill="url(#gSys)"/>
<circle cx="537.40" cy="471.30" r="1.1" fill="#3a3a40"/><circle cx="541.50" cy="472.40" r="1.1" fill="#3a3a40"/><circle cx="544.50" cy="475.40" r="1.1" fill="#3a3a40"/><circle cx="545.60" cy="479.50" r="1.1" fill="#3a3a40"/><circle cx="544.50" cy="483.60" r="1.1" fill="#3a3a40"/><circle cx="541.50" cy="486.60" r="1.1" fill="#3a3a40"/><circle cx="537.40" cy="487.70" r="1.1" fill="#3a3a40"/><circle cx="533.30" cy="486.60" r="1.1" fill="#3a3a40"/><circle cx="530.30" cy="483.60" r="1.1" fill="#3a3a40"/><circle cx="529.20" cy="479.50" r="1.1" fill="#3a3a40"/><circle cx="530.30" cy="475.40" r="1.1" fill="#3a3a40"/><circle cx="533.30" cy="472.40" r="1.1" fill="#3a3a40"/>
<circle cx="537.4" cy="479.5" r="7.8" fill="#3a3a40"/>
<circle cx="537.4" cy="479.5" r="6.2" fill="#a0a0a6"/>
<circle cx="537.4" cy="479.5" r="5.2" fill="#55555c"/>
<path d="M537.4 479.5V474.6M537.4 479.5L533.2 482M537.4 479.5L541.6 482" stroke="#b0b0b6" stroke-width="1.2"/>
<circle cx="537.4" cy="479.5" r="1.2" fill="#b0b0b6"/>
<circle cx="537.4" cy="496.2" r=".8" fill="#1a1a2a"/>
<!-- Activity Monitor -->
<rect x="555" y="470.5" width="22.5" height="19.5" rx="1.2" fill="#1e2a26"/>
<rect x="556.5" y="472" width="19.5" height="16.5" fill="#14201c"/>
<path d="M557 481H563L564.5 476 566 485 567.5 479H575" fill="none" stroke="#3ab878" stroke-width=".7"/>
<!-- Butterfly -->
<path d="M594.5 475Q590 469 584 470Q583 476 586.5 480Q583.5 483 587 488Q592 490 594.5 484Z" fill="#f0a020" stroke="#5a3a10" stroke-width=".7"/>
<path d="M595.8 475Q600.3 469 606.3 470Q607.3 476 603.8 480Q606.8 483 603.3 488Q598.3 490 595.8 484Z" fill="#f0a020" stroke="#5a3a10" stroke-width=".7"/>
<path d="M595.15 474V486" stroke="#f4f0e0" stroke-width="1"/>
<!-- LINE -->
<rect x="613" y="469" width="22.5" height="22" rx="3" fill="url(#gLine)"/>
<ellipse cx="624.3" cy="479" rx="7.8" ry="6" fill="#fff"/>
<path d="M622 484L621 487.5 626 484.5Z" fill="#fff"/>
<text x="624.3" y="480.6" font-size="4.2" font-weight="bold" text-anchor="middle" fill="#28b838" font-family="Liberation Sans">LINE</text>
<!-- Shield -->
<path d="M642 472L653 468.5 664 472V483Q660 489 653 491.5 646 489 642 483Z" fill="url(#gShield)"/>
<path d="M647.5 479L648.5 482H651.5L649 484 650 487 647.5 485.2 645 487 646 484 643.5 482H646.5Z" fill="#f4f0e4"/>
<!-- Blue circle -->
<circle cx="681.6" cy="479.5" r="12.5" fill="#6a9ad8"/>
<circle cx="681.6" cy="479.5" r="11.5" fill="#3a7ed8"/>
<circle cx="681.6" cy="479.5" r="10.5" fill="url(#gBlue)"/>
<circle cx="681.7" cy="496.3" r=".8" fill="#1a1a2a"/>
<!-- separator -->
<path d="M702.3 468V493" stroke="#7890a8" stroke-width=".8"/>
<!-- Downloads folder -->
<path d="M710.7 472H717.5L719 473.5H737V489.5H710.7Z" fill="url(#gFolder)"/>
<rect x="710.7" y="474.5" width="26.3" height="15" fill="#6cc4f0"/>
<circle cx="723.8" cy="482" r="3.8" fill="none" stroke="#4aa8e0" stroke-width="1"/>
<path d="M723.8 479.5V484M722 482.5L723.8 484.5 725.6 482.5" fill="none" stroke="#4aa8e0" stroke-width=".8"/>
<!-- Trash -->
<path d="M743.5 470.5H762L760 490.5Q752.7 492 745.5 490.5Z" fill="url(#gTrash)"/>
<ellipse cx="752.7" cy="471" rx="9.3" ry="2" fill="#d8dadc"/>
<path d="M746 471Q749 468 752 470.5Q755 468.5 759 471" fill="none" stroke="#5a5a5a" stroke-width="1.2"/>
</svg>

<div class="abs" style="left:0;top:0;width:1px;height:499px;background:#eef0f4"></div>
<div class="abs" style="left:1px;top:13px;width:1px;height:486px;background:linear-gradient(180deg,rgba(0,0,0,.55) 0px,rgba(0,0,0,.45) 280px,rgba(0,0,0,0) 340px)"></div>
<div class="abs" style="left:798px;top:13px;width:1px;height:486px;background:linear-gradient(180deg,rgba(0,0,0,.45) 0px,rgba(0,0,0,.35) 160px,rgba(0,0,0,0) 210px)"></div>
<div class="abs" style="left:799px;top:0;width:1px;height:499px;background:#eef2f8"></div>
</body></html>
